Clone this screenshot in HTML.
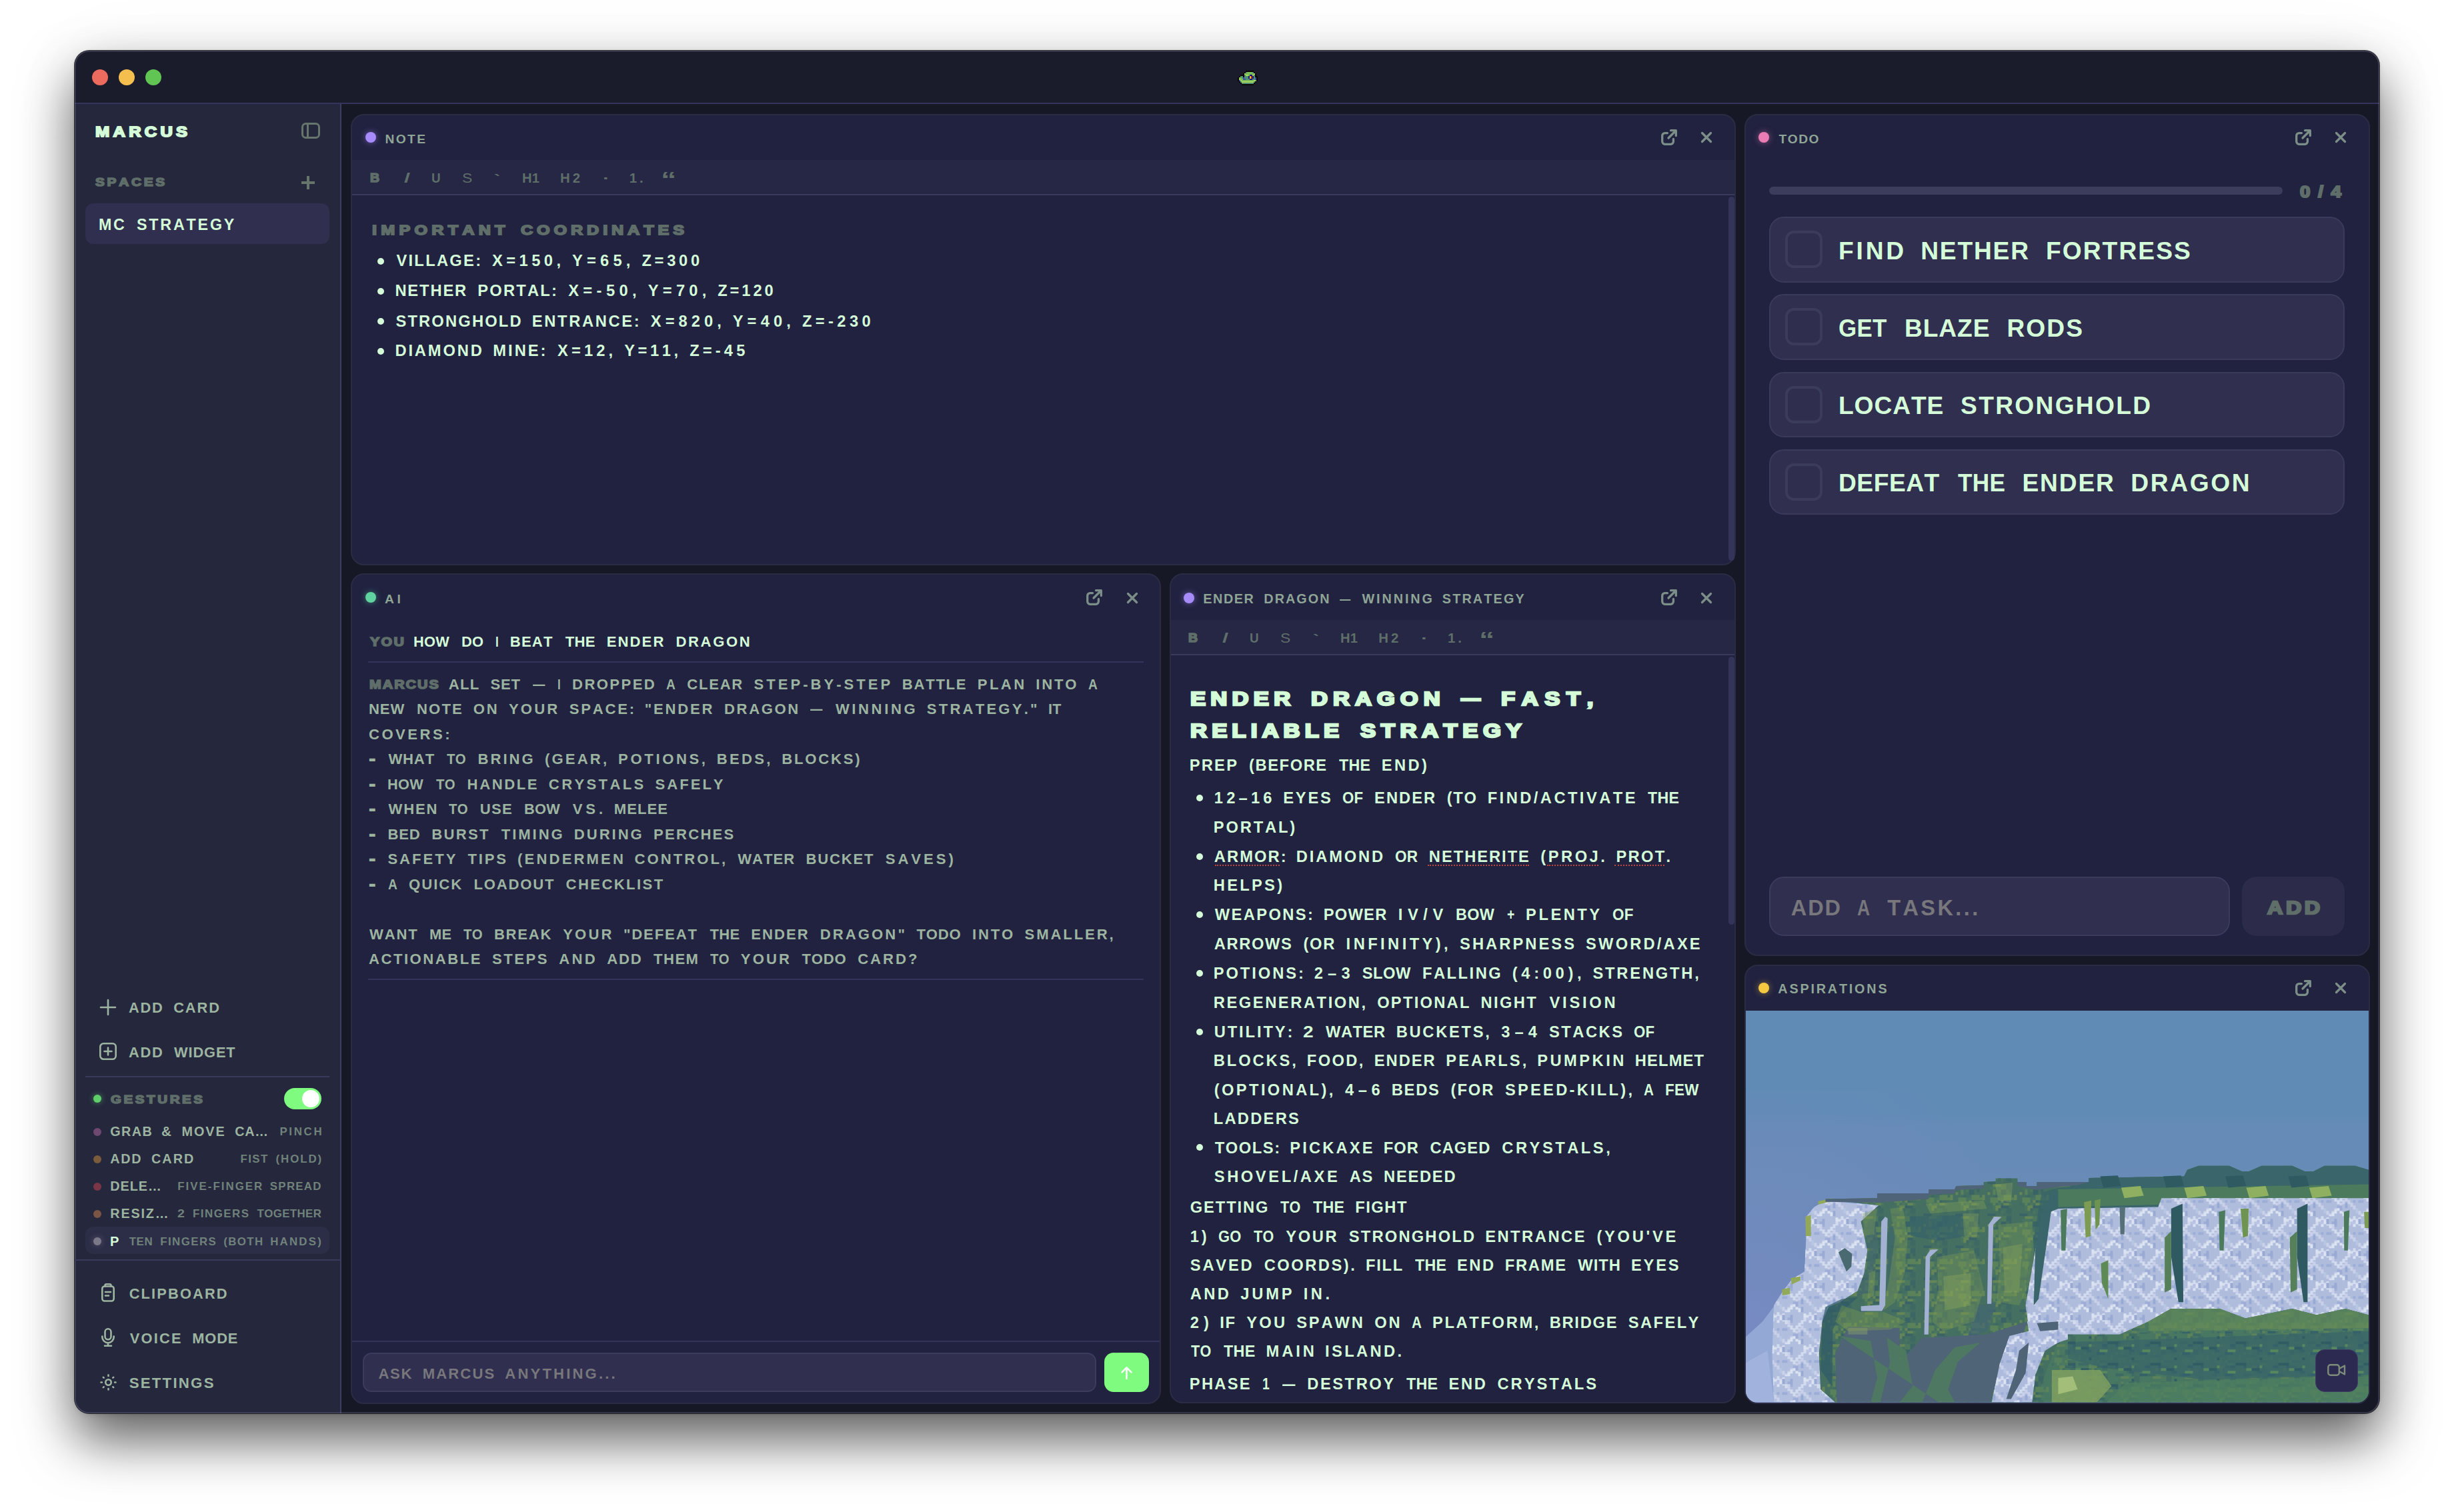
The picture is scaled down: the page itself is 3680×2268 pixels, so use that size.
<!DOCTYPE html>
<html lang="en">
<head>
<meta charset="utf-8">
<meta name="viewport" content="width=3680">
<title>Marcus — MC Strategy</title>
<style>
html,body{margin:0;padding:0;background:#fff;}
body{width:3680px;height:2268px;position:relative;overflow:hidden;font-family:"Liberation Sans","DejaVu Sans",sans-serif;font-kerning:none;}
.a{position:absolute;box-sizing:border-box;}
.t{position:absolute;white-space:pre;font-weight:bold;transform-origin:0 0;}
.win{left:112px;top:76px;width:3456px;height:2044px;border-radius:22px;background:#171826;overflow:hidden;
  box-shadow:0 0 0 1px rgba(0,0,0,.75),0 40px 80px rgba(0,0,0,.62),0 0 110px rgba(0,0,0,.05),0 3px 8px rgba(0,0,0,.1);}
.winhl{left:112px;top:76px;width:3456px;height:2044px;border-radius:22px;box-shadow:inset 0 0 0 1.5px rgba(130,130,160,.38);pointer-events:none;}
.titlebar{left:0;top:0;width:3456px;height:80px;background:#1a1b2b;border-bottom:2px solid #34355a;}
.sidebar{left:0;top:80px;width:400px;height:1964px;background:#25273d;border-right:2px solid #3d3e5f;}
.tl{width:24px;height:24px;border-radius:50%;top:104px;}
.card{background:#212240;border:2px solid #2a2c43;border-radius:20px;overflow:hidden;}

.tb{left:0;right:0;background:#252745;border-bottom:2px solid #393a5c;}
.dot{width:16px;height:16px;border-radius:50%;}
.gd{width:12px;height:12px;border-radius:50%;left:140px;}
.sb{width:9px;border-radius:5px;background:#34345a;}
.hr{height:2px;background:#33345a;}
.item{left:2653px;width:863px;height:98.5px;border-radius:22px;background:#302f4f;border:2px solid #3a3a5b;}
.cb{left:22px;top:19px;width:56px;height:56px;border-radius:13px;border:4px solid #3b3b5c;background:#2f2e4e;}
svg{position:absolute;overflow:visible;}
.ic{fill:none;stroke:#7b8f88;stroke-width:3.3;stroke-linecap:round;stroke-linejoin:round;}
.is{fill:none;stroke:#9db5a0;stroke-width:2.6;stroke-linecap:round;stroke-linejoin:round;}
</style>
</head>
<body>
<div class="a win">
  <div class="a titlebar"></div>
  <div class="a sidebar"></div>
</div>
<div class="a winhl"></div>

<!-- traffic lights -->
<div class="a tl" style="left:138px;background:#ed6a5e;"></div>
<div class="a tl" style="left:178px;background:#f5bf4f;"></div>
<div class="a tl" style="left:218px;background:#61c554;"></div>

<svg style="left:1856px;top:106px" width="30" height="22" viewBox="0 0 15 11" shape-rendering="crispEdges"><rect x="6" y="0" width="1" height="1" fill="#0c0606"/><rect x="7" y="0" width="1" height="1" fill="#0c0606"/><rect x="8" y="0" width="1" height="1" fill="#0c0606"/><rect x="9" y="0" width="1" height="1" fill="#0c0606"/><rect x="10" y="0" width="1" height="1" fill="#0c0606"/><rect x="11" y="0" width="1" height="1" fill="#0c0606"/><rect x="5" y="1" width="1" height="1" fill="#0c0606"/><rect x="6" y="1" width="1" height="1" fill="#4f8f73"/><rect x="7" y="1" width="1" height="1" fill="#7cbf5a"/><rect x="8" y="1" width="1" height="1" fill="#7cbf5a"/><rect x="9" y="1" width="1" height="1" fill="#7cbf5a"/><rect x="10" y="1" width="1" height="1" fill="#7cbf5a"/><rect x="11" y="1" width="1" height="1" fill="#4f8f73"/><rect x="12" y="1" width="1" height="1" fill="#0c0606"/><rect x="4" y="2" width="1" height="1" fill="#0c0606"/><rect x="5" y="2" width="1" height="1" fill="#a9d65c"/><rect x="6" y="2" width="1" height="1" fill="#7cbf5a"/><rect x="7" y="2" width="1" height="1" fill="#7cbf5a"/><rect x="8" y="2" width="1" height="1" fill="#7cbf5a"/><rect x="9" y="2" width="1" height="1" fill="#7cbf5a"/><rect x="10" y="2" width="1" height="1" fill="#7cbf5a"/><rect x="11" y="2" width="1" height="1" fill="#7cbf5a"/><rect x="12" y="2" width="1" height="1" fill="#a9d65c"/><rect x="13" y="2" width="1" height="1" fill="#0c0606"/><rect x="2" y="3" width="1" height="1" fill="#0c0606"/><rect x="3" y="3" width="1" height="1" fill="#0c0606"/><rect x="4" y="3" width="1" height="1" fill="#0c0606"/><rect x="5" y="3" width="1" height="1" fill="#4f8f73"/><rect x="6" y="3" width="1" height="1" fill="#a9d65c"/><rect x="7" y="3" width="1" height="1" fill="#a9d65c"/><rect x="8" y="3" width="1" height="1" fill="#7cbf5a"/><rect x="9" y="3" width="1" height="1" fill="#16167a"/><rect x="10" y="3" width="1" height="1" fill="#16167a"/><rect x="11" y="3" width="1" height="1" fill="#a9d65c"/><rect x="12" y="3" width="1" height="1" fill="#4f8f73"/><rect x="13" y="3" width="1" height="1" fill="#0c0606"/><rect x="1" y="4" width="1" height="1" fill="#0c0606"/><rect x="2" y="4" width="1" height="1" fill="#4f8f73"/><rect x="3" y="4" width="1" height="1" fill="#4f8f73"/><rect x="4" y="4" width="1" height="1" fill="#0c0606"/><rect x="5" y="4" width="1" height="1" fill="#4f8f73"/><rect x="6" y="4" width="1" height="1" fill="#4f8f73"/><rect x="7" y="4" width="1" height="1" fill="#4f8f73"/><rect x="8" y="4" width="1" height="1" fill="#16167a"/><rect x="9" y="4" width="1" height="1" fill="#f0a030"/><rect x="10" y="4" width="1" height="1" fill="#8a2a1a"/><rect x="11" y="4" width="1" height="1" fill="#16167a"/><rect x="12" y="4" width="1" height="1" fill="#4f8f73"/><rect x="13" y="4" width="1" height="1" fill="#0c0606"/><rect x="14" y="4" width="1" height="1" fill="#0c0606"/><rect x="0" y="5" width="1" height="1" fill="#0c0606"/><rect x="1" y="5" width="1" height="1" fill="#7cbf5a"/><rect x="2" y="5" width="1" height="1" fill="#7cbf5a"/><rect x="3" y="5" width="1" height="1" fill="#4f8f73"/><rect x="4" y="5" width="1" height="1" fill="#3a4fa0"/><rect x="5" y="5" width="1" height="1" fill="#4f8f73"/><rect x="6" y="5" width="1" height="1" fill="#4f8f73"/><rect x="7" y="5" width="1" height="1" fill="#4f8f73"/><rect x="8" y="5" width="1" height="1" fill="#16167a"/><rect x="9" y="5" width="1" height="1" fill="#e8d840"/><rect x="10" y="5" width="1" height="1" fill="#b03820"/><rect x="11" y="5" width="1" height="1" fill="#16167a"/><rect x="12" y="5" width="1" height="1" fill="#4f8f73"/><rect x="13" y="5" width="1" height="1" fill="#3a4fa0"/><rect x="14" y="5" width="1" height="1" fill="#0c0606"/><rect x="0" y="6" width="1" height="1" fill="#0c0606"/><rect x="1" y="6" width="1" height="1" fill="#a9d65c"/><rect x="2" y="6" width="1" height="1" fill="#7cbf5a"/><rect x="3" y="6" width="1" height="1" fill="#7cbf5a"/><rect x="4" y="6" width="1" height="1" fill="#3a4fa0"/><rect x="5" y="6" width="1" height="1" fill="#3a4fa0"/><rect x="6" y="6" width="1" height="1" fill="#4f8f73"/><rect x="7" y="6" width="1" height="1" fill="#4f8f73"/><rect x="8" y="6" width="1" height="1" fill="#4f8f73"/><rect x="9" y="6" width="1" height="1" fill="#16167a"/><rect x="10" y="6" width="1" height="1" fill="#16167a"/><rect x="11" y="6" width="1" height="1" fill="#4f8f73"/><rect x="12" y="6" width="1" height="1" fill="#4f8f73"/><rect x="13" y="6" width="1" height="1" fill="#3a4fa0"/><rect x="14" y="6" width="1" height="1" fill="#0c0606"/><rect x="0" y="7" width="1" height="1" fill="#0c0606"/><rect x="1" y="7" width="1" height="1" fill="#3a4fa0"/><rect x="2" y="7" width="1" height="1" fill="#a9d65c"/><rect x="3" y="7" width="1" height="1" fill="#7cbf5a"/><rect x="4" y="7" width="1" height="1" fill="#7cbf5a"/><rect x="5" y="7" width="1" height="1" fill="#7cbf5a"/><rect x="6" y="7" width="1" height="1" fill="#7cbf5a"/><rect x="7" y="7" width="1" height="1" fill="#7cbf5a"/><rect x="8" y="7" width="1" height="1" fill="#7cbf5a"/><rect x="9" y="7" width="1" height="1" fill="#7cbf5a"/><rect x="10" y="7" width="1" height="1" fill="#7cbf5a"/><rect x="11" y="7" width="1" height="1" fill="#7cbf5a"/><rect x="12" y="7" width="1" height="1" fill="#b5d860"/><rect x="13" y="7" width="1" height="1" fill="#7cbf5a"/><rect x="14" y="7" width="1" height="1" fill="#0c0606"/><rect x="1" y="8" width="1" height="1" fill="#0c0606"/><rect x="2" y="8" width="1" height="1" fill="#4f8f73"/><rect x="3" y="8" width="1" height="1" fill="#a9d65c"/><rect x="4" y="8" width="1" height="1" fill="#a9d65c"/><rect x="5" y="8" width="1" height="1" fill="#a9d65c"/><rect x="6" y="8" width="1" height="1" fill="#a9d65c"/><rect x="7" y="8" width="1" height="1" fill="#a9d65c"/><rect x="8" y="8" width="1" height="1" fill="#a9d65c"/><rect x="9" y="8" width="1" height="1" fill="#a9d65c"/><rect x="10" y="8" width="1" height="1" fill="#a9d65c"/><rect x="11" y="8" width="1" height="1" fill="#a9d65c"/><rect x="12" y="8" width="1" height="1" fill="#4f8f73"/><rect x="13" y="8" width="1" height="1" fill="#0c0606"/><rect x="2" y="9" width="1" height="1" fill="#0c0606"/><rect x="3" y="9" width="1" height="1" fill="#4f8f73"/><rect x="4" y="9" width="1" height="1" fill="#4f8f73"/><rect x="5" y="9" width="1" height="1" fill="#4f8f73"/><rect x="6" y="9" width="1" height="1" fill="#4f8f73"/><rect x="7" y="9" width="1" height="1" fill="#4f8f73"/><rect x="8" y="9" width="1" height="1" fill="#4f8f73"/><rect x="9" y="9" width="1" height="1" fill="#4f8f73"/><rect x="10" y="9" width="1" height="1" fill="#4f8f73"/><rect x="11" y="9" width="1" height="1" fill="#4f8f73"/><rect x="12" y="9" width="1" height="1" fill="#0c0606"/><rect x="3" y="10" width="1" height="1" fill="#0c0606"/><rect x="4" y="10" width="1" height="1" fill="#0c0606"/><rect x="5" y="10" width="1" height="1" fill="#0c0606"/><rect x="6" y="10" width="1" height="1" fill="#0c0606"/><rect x="7" y="10" width="1" height="1" fill="#0c0606"/><rect x="8" y="10" width="1" height="1" fill="#0c0606"/><rect x="9" y="10" width="1" height="1" fill="#0c0606"/><rect x="10" y="10" width="1" height="1" fill="#0c0606"/><rect x="11" y="10" width="1" height="1" fill="#0c0606"/></svg>

<!-- sidebar widgets -->
<svg style="left:452px;top:184px" width="28" height="24" viewBox="0 0 28 24"><rect x="1.5" y="1.5" width="25" height="21" rx="5" fill="none" stroke="#66756c" stroke-width="3"/><line x1="9.5" y1="2" x2="9.5" y2="22" stroke="#66756c" stroke-width="3"/></svg>
<svg style="left:452px;top:264px" width="20" height="20" viewBox="0 0 20 20"><path d="M10 0v20M0 10h20" stroke="#66756c" stroke-width="4" fill="none"/></svg>
<div class="a" style="left:128px;top:304.5px;width:366px;height:61px;border-radius:12px;background:#302f50;"></div>

<svg style="left:150px;top:1498.6px" width="24" height="24" viewBox="0 0 24 24"><path class="is" d="M12 1v22M1 12h22"/></svg>
<svg style="left:149px;top:1564px" width="26" height="26" viewBox="0 0 26 26"><rect class="is" x="1.3" y="1.3" width="23.4" height="23.4" rx="5"/><path class="is" d="M13 7.5v11M7.5 13h11"/></svg>
<div class="a hr" style="left:128px;top:1614px;width:366px;background:#38395c;"></div>
<div class="a gd" style="top:1642.4px;background:#5fcf6a;box-shadow:0 0 8px rgba(95,207,106,.6);"></div>
<div class="a" style="left:425.5px;top:1632px;width:56px;height:32px;border-radius:16px;background:#7ffb7f;"></div>
<div class="a" style="left:453px;top:1635px;width:26px;height:26px;border-radius:50%;background:#fff;"></div>
<div class="a" style="left:128px;top:1840px;width:366px;height:41px;border-radius:12px;background:#2c2d47;"></div>
<div class="a gd" style="top:1692px;background:#6d4870;"></div>
<div class="a gd" style="top:1733px;background:#7a5b3c;"></div>
<div class="a gd" style="top:1774px;background:#7a3647;"></div>
<div class="a gd" style="top:1815px;background:#7a5545;"></div>
<div class="a gd" style="top:1855.5px;background:#7b7888;box-shadow:0 0 8px rgba(123,120,136,.6);"></div>
<div class="a hr" style="left:112px;top:1889px;width:398px;background:#38395c;"></div>

<!-- clipboard / mic / settings icons -->
<svg style="left:152px;top:1925px" width="20" height="28" viewBox="0 0 20 28"><rect class="is" x="1.3" y="4.5" width="17.4" height="22" rx="3.5"/><path class="is" d="M5.5 4.5V3.2a2 2 0 0 1 2-2h5a2 2 0 0 1 2 2v1.3M6 13h8M6 18.5h5"/></svg>
<svg style="left:152px;top:1992px" width="20" height="28" viewBox="0 0 20 28"><rect class="is" x="5.5" y="1.3" width="9" height="16" rx="4.5"/><path class="is" d="M1.3 12.5v1a8.7 8.7 0 0 0 17.4 0v-1M10 22.3v4.4M5 26.7h10"/></svg>
<svg style="left:149.5px;top:2060.5px" width="25" height="25" viewBox="0 0 25 25"><circle class="is" cx="12.5" cy="12.5" r="4.2"/><path class="is" d="M12.5 1.5v1.4M12.5 22.1v1.4M1.5 12.5h1.4M22.1 12.5h1.4M4.8 4.8l.9 .9M19.3 19.3l.9 .9M4.8 20.2l.9-.9M19.3 5.7l.9-.9"/></svg>

<!-- ===== NOTE card ===== -->
<div class="a card" style="left:526px;top:170.5px;width:2076.5px;height:677px;">
  <div class="a tb" style="top:67px;height:53.5px;"></div>
</div>
<div class="a dot" style="left:548px;top:198.4px;background:#a78bfa;box-shadow:0 0 10px rgba(167,139,250,.55);"></div>
<svg style="left:2491px;top:194px" width="24" height="24" viewBox="0 0 24 24"><path class="ic" d="M9.5 5.6H5.7a4 4 0 0 0-4 4v8.7a4 4 0 0 0 4 4h8.7a4 4 0 0 0 4-4v-3.8M11 13L22 2M14.5 1.7H22.3V9.5"/></svg>
<svg style="left:2551px;top:198px" width="16" height="16" viewBox="0 0 16 16"><path class="ic" d="M1.5 1.5l13 13M14.5 1.5l-13 13"/></svg>
<div class="a sb" style="left:2591.5px;top:295px;height:546px;"></div>
<div class="a" style="left:566.3px;top:386.8px;width:10px;height:10px;border-radius:50%;background:#d4fcd8;"></div>
<div class="a" style="left:566.3px;top:431.8px;width:10px;height:10px;border-radius:50%;background:#d4fcd8;"></div>
<div class="a" style="left:566.3px;top:477px;width:10px;height:10px;border-radius:50%;background:#d4fcd8;"></div>
<div class="a" style="left:566.3px;top:521.8px;width:10px;height:10px;border-radius:50%;background:#d4fcd8;"></div>

<!-- ===== TODO card ===== -->
<div class="a card" style="left:2615.5px;top:170.5px;width:938px;height:1263.5px;"></div>
<div class="a dot" style="left:2637px;top:198px;background:#ec7cb4;box-shadow:0 0 10px rgba(236,124,180,.55);"></div>
<svg style="left:3442px;top:194px" width="24" height="24" viewBox="0 0 24 24"><path class="ic" d="M9.5 5.6H5.7a4 4 0 0 0-4 4v8.7a4 4 0 0 0 4 4h8.7a4 4 0 0 0 4-4v-3.8M11 13L22 2M14.5 1.7H22.3V9.5"/></svg>
<svg style="left:3502px;top:198px" width="16" height="16" viewBox="0 0 16 16"><path class="ic" d="M1.5 1.5l13 13M14.5 1.5l-13 13"/></svg>
<div class="a" style="left:2653px;top:280px;width:770px;height:12px;border-radius:6px;background:#3c3c5c;"></div>
<div class="a item" style="top:325.3px;"><div class="a cb"></div></div>
<div class="a item" style="top:441.4px;"><div class="a cb"></div></div>
<div class="a item" style="top:557.5px;"><div class="a cb"></div></div>
<div class="a item" style="top:673.5px;"><div class="a cb"></div></div>
<div class="a" style="left:2653px;top:1315px;width:691px;height:89px;border-radius:22px;background:#312f50;border:2px solid #3b3b5d;"></div>
<div class="a" style="left:3361.5px;top:1315px;width:154.5px;height:89px;border-radius:22px;background:#2c2b4a;"></div>

<!-- ===== ASPIRATIONS card ===== -->
<div class="a card" style="left:2615.5px;top:1447px;width:938px;height:658.5px;">
<svg class="a" style="left:0px;top:66.7px" width="934.2" height="588.3" viewBox="2617.5 1515.7 934.2 588.3" preserveAspectRatio="none">
<defs>
<linearGradient id="sky" x1="0" y1="0" x2="0" y2="1"><stop offset="0" stop-color="#5f8bb4"/><stop offset=".26" stop-color="#608bb5"/><stop offset=".3" stop-color="#668bb7"/><stop offset=".65" stop-color="#6a8ab7"/><stop offset="1" stop-color="#7089bb"/></linearGradient>
<linearGradient id="mist" x1="0" y1="0" x2="1" y2="0"><stop offset="0" stop-color="#8ea3d2" stop-opacity=".0"/><stop offset="1" stop-color="#a9b8de" stop-opacity=".95"/></linearGradient>
<radialGradient id="pur" cx="0" cy=".75" r="1" gradientUnits="objectBoundingBox"><stop offset="0" stop-color="#7f8bc9" stop-opacity=".55"/><stop offset=".5" stop-color="#7e8bc8" stop-opacity=".22"/><stop offset="1" stop-color="#7e8bc8" stop-opacity="0"/></radialGradient>
<pattern id="pw" width="48" height="48" patternUnits="userSpaceOnUse">
<rect x="0" y="24" width="4" height="6" fill="#d3dbee"/>
<rect x="4" y="20" width="4" height="6" fill="#d3dbee"/>
<rect x="8" y="16" width="4" height="6" fill="#d3dbee"/>
<rect x="12" y="12" width="4" height="6" fill="#d3dbee"/>
<rect x="16" y="8" width="4" height="6" fill="#d3dbee"/>
<rect x="20" y="4" width="4" height="6" fill="#d3dbee"/>
<rect x="24" y="0" width="4" height="6" fill="#d3dbee"/>
<rect x="28" y="4" width="4" height="6" fill="#d3dbee"/>
<rect x="32" y="8" width="4" height="6" fill="#d3dbee"/>
<rect x="36" y="12" width="4" height="6" fill="#d3dbee"/>
<rect x="40" y="16" width="4" height="6" fill="#d3dbee"/>
<rect x="44" y="20" width="4" height="6" fill="#d3dbee"/>
<rect x="0" y="32" width="4" height="6" fill="#c8d1e9"/>
<rect x="4" y="28" width="4" height="6" fill="#c8d1e9"/>
<rect x="8" y="24" width="4" height="6" fill="#c8d1e9"/>
<rect x="12" y="20" width="4" height="6" fill="#c8d1e9"/>
<rect x="16" y="24" width="4" height="6" fill="#c8d1e9"/>
<rect x="20" y="28" width="4" height="6" fill="#c8d1e9"/>
<rect x="24" y="32" width="4" height="6" fill="#c8d1e9"/>
<rect x="28" y="36" width="4" height="6" fill="#c8d1e9"/>
<rect x="32" y="40" width="4" height="6" fill="#c8d1e9"/>
<rect x="36" y="44" width="4" height="6" fill="#c8d1e9"/>
<rect x="40" y="40" width="4" height="6" fill="#c8d1e9"/>
<rect x="44" y="36" width="4" height="6" fill="#c8d1e9"/>
<rect x="0" y="34" width="4" height="6" fill="#dbe2f1"/>
<rect x="4" y="38" width="4" height="6" fill="#dbe2f1"/>
<rect x="8" y="42" width="4" height="6" fill="#dbe2f1"/>
<rect x="12" y="46" width="4" height="6" fill="#dbe2f1"/>
<rect x="16" y="2" width="4" height="6" fill="#dbe2f1"/>
<rect x="20" y="6" width="4" height="6" fill="#dbe2f1"/>
<rect x="24" y="10" width="4" height="6" fill="#dbe2f1"/>
<rect x="28" y="6" width="4" height="6" fill="#dbe2f1"/>
<rect x="32" y="2" width="4" height="6" fill="#dbe2f1"/>
<rect x="36" y="46" width="4" height="6" fill="#dbe2f1"/>
<rect x="40" y="42" width="4" height="6" fill="#dbe2f1"/>
<rect x="44" y="38" width="4" height="6" fill="#dbe2f1"/>
<rect x="20" y="8" width="8" height="4" fill="#b9c5e4"/>
<rect x="4" y="32" width="4" height="8" fill="#9cadd6"/>
<rect x="0" y="32" width="4" height="4" fill="#a1b0d8"/>
<rect x="24" y="24" width="4" height="4" fill="#9cadd6"/>
<rect x="32" y="24" width="8" height="4" fill="#9cadd6"/>
<rect x="12" y="40" width="4" height="8" fill="#98aad4"/>
<rect x="36" y="24" width="4" height="4" fill="#9cadd6"/>
<rect x="32" y="8" width="4" height="4" fill="#c9d2ea"/>
<rect x="32" y="4" width="4" height="8" fill="#98aad4"/>
<rect x="40" y="8" width="8" height="8" fill="#9cadd6"/>
<rect x="40" y="12" width="4" height="8" fill="#c9d2ea"/>
<rect x="44" y="4" width="4" height="8" fill="#98aad4"/>
<rect x="12" y="28" width="4" height="8" fill="#98aad4"/>
<rect x="28" y="36" width="4" height="8" fill="#b9c5e4"/>
</pattern><pattern id="pg" width="48" height="48" patternUnits="userSpaceOnUse">
<rect x="12" y="8" width="4" height="8" fill="#5d8459"/>
<rect x="16" y="32" width="8" height="8" fill="#6a8a55"/>
<rect x="28" y="16" width="4" height="8" fill="#4f7a5e"/>
<rect x="24" y="8" width="4" height="4" fill="#4a755f"/>
<rect x="24" y="0" width="12" height="8" fill="#4f7a5e"/>
<rect x="20" y="20" width="12" height="4" fill="#4a755f"/>
<rect x="36" y="28" width="4" height="4" fill="#4f7a5e"/>
<rect x="28" y="44" width="4" height="8" fill="#4f7a5e"/>
<rect x="44" y="16" width="8" height="8" fill="#6a8a55"/>
<rect x="24" y="40" width="4" height="4" fill="#4a755f"/>
<rect x="20" y="8" width="8" height="4" fill="#4f7a5e"/>
<rect x="12" y="16" width="12" height="4" fill="#436d61"/>
<rect x="24" y="24" width="4" height="4" fill="#6a8a55"/>
<rect x="28" y="24" width="8" height="4" fill="#3a6465"/>
<rect x="24" y="32" width="12" height="4" fill="#386166"/>
<rect x="20" y="40" width="4" height="4" fill="#416b61"/>
<rect x="4" y="8" width="4" height="8" fill="#436d61"/>
<rect x="12" y="0" width="12" height="4" fill="#6a8a55"/>
<rect x="16" y="16" width="4" height="4" fill="#3d6763"/>
<rect x="32" y="20" width="4" height="8" fill="#4a755f"/>
<rect x="32" y="36" width="8" height="8" fill="#3d6763"/>
<rect x="32" y="24" width="8" height="4" fill="#416b61"/>
<rect x="4" y="28" width="4" height="4" fill="#416b61"/>
<rect x="4" y="12" width="4" height="4" fill="#6a8a55"/>
<rect x="20" y="36" width="4" height="4" fill="#3d6763"/>
<rect x="36" y="8" width="4" height="4" fill="#3a6465"/>
<rect x="36" y="0" width="4" height="8" fill="#4f7a5e"/>
<rect x="24" y="8" width="8" height="8" fill="#386166"/>
<rect x="20" y="28" width="4" height="4" fill="#4f7a5e"/>
<rect x="28" y="28" width="8" height="4" fill="#6a8a55"/>
<rect x="8" y="4" width="12" height="4" fill="#4a755f"/>
<rect x="28" y="44" width="12" height="4" fill="#436d61"/>
<rect x="12" y="32" width="4" height="8" fill="#4a755f"/>
<rect x="32" y="0" width="8" height="8" fill="#3a6465"/>
<rect x="4" y="44" width="12" height="4" fill="#386166"/>
<rect x="8" y="20" width="12" height="8" fill="#5d8459"/>
<rect x="32" y="20" width="12" height="4" fill="#5d8459"/>
<rect x="12" y="24" width="4" height="8" fill="#5d8459"/>
<rect x="28" y="20" width="4" height="4" fill="#3d6763"/>
<rect x="28" y="16" width="12" height="8" fill="#5d8459"/>
</pattern><pattern id="pf" width="64" height="32" patternUnits="userSpaceOnUse">
<rect x="44" y="28" width="16" height="4" fill="#3d6a66"/>
<rect x="8" y="12" width="12" height="4" fill="#33606a"/>
<rect x="60" y="12" width="12" height="4" fill="#3d6a66"/>
<rect x="60" y="0" width="24" height="4" fill="#5a8a5e"/>
<rect x="44" y="4" width="16" height="4" fill="#33606a"/>
<rect x="24" y="28" width="16" height="4" fill="#2f5a64"/>
<rect x="40" y="4" width="16" height="4" fill="#5a8a5e"/>
<rect x="48" y="4" width="12" height="4" fill="#2f5a64"/>
<rect x="16" y="0" width="24" height="4" fill="#2f5a64"/>
<rect x="56" y="8" width="24" height="4" fill="#356268"/>
<rect x="60" y="20" width="24" height="4" fill="#2f5a64"/>
<rect x="16" y="0" width="24" height="4" fill="#33606a"/>
<rect x="12" y="8" width="12" height="4" fill="#5a8a5e"/>
<rect x="24" y="0" width="12" height="4" fill="#3d6a66"/>
</pattern><clipPath id="lc"><rect x="2617.5" y="1515.7" width="934.2" height="588.3"/></clipPath></defs>
<g clip-path="url(#lc)">
<rect x="2617.5" y="1515.7" width="934.2" height="588.3" fill="url(#sky)"/>
<rect x="2617.5" y="1635.7" width="420" height="470" fill="url(#pur)"/>
<polygon points="2616.0,2006.2 2642.6,1982.0 2664.4,1953.0 2674.1,2103.0 2616.0,2103.0" fill="#9bafd9" opacity=".8"/>
<polygon points="2616.0,2044.9 2649.9,2025.6 2659.6,2103.0 2616.0,2103.0" fill="#a7b8e0" opacity=".7"/>
<polygon points="2737.0,1800.5 2816.9,1807.8 2790.2,1832.0 2799.9,1875.5 2795.1,1909.4 2785.4,1936.0 2758.8,1953.0 2741.8,1960.2 2732.2,1982.0 2727.3,2030.4 2729.7,2083.7 2751.5,2103.0 2659.6,2103.0 2657.1,2030.4 2659.6,1957.8 2671.7,1938.5 2686.2,1919.1 2705.5,1907.0 2708.0,1856.2 2708.0,1824.7 2720.1,1810.2" fill="#b2bedd"/><polygon points="2737.0,1800.5 2816.9,1807.8 2790.2,1832.0 2799.9,1875.5 2795.1,1909.4 2785.4,1936.0 2758.8,1953.0 2741.8,1960.2 2732.2,1982.0 2727.3,2030.4 2729.7,2083.7 2751.5,2103.0 2659.6,2103.0 2657.1,2030.4 2659.6,1957.8 2671.7,1938.5 2686.2,1919.1 2705.5,1907.0 2708.0,1856.2 2708.0,1824.7 2720.1,1810.2" fill="url(#pw)"/>
<polygon points="2756.4,1877.9 2766.0,1871.9 2776.9,1880.4 2775.7,1899.7 2768.5,1907.0 2761.2,1890.0" fill="#4a6a72"/>
<polygon points="2706.8,1824.7 2715.2,1822.3 2715.2,1853.7 2707.5,1853.7" fill="#92a95a"/>
<polygon points="2685.0,1916.7 2699.5,1914.2 2699.5,1920.3 2686.2,1926.4" fill="#92a95a"/>
<polygon points="2671.7,1933.6 2683.8,1931.2 2683.8,1940.9 2672.1,1942.8" fill="#92a95a"/>
<polygon points="2726.1,1801.7 2746.7,1796.9 2746.7,1801.0 2726.1,1806.6" fill="#92a95a"/>
<polygon points="2737.0,1798.1 2814.5,1796.9 2814.5,1789.6 2891.9,1789.6 2891.9,1783.6 2930.6,1783.6 2933.0,1778.7 2974.2,1777.5 2974.2,1772.7 2992.3,1771.5 2992.3,1767.1 3025.0,1767.1 3025.0,1772.7 3038.3,1772.7 3038.3,1778.7 3054.0,1778.7 3054.0,1772.7 3086.0,1772.7 3132.0,1772.7 3132.0,1766.6 3274.8,1764.2 3279.6,1754.5 3296.6,1748.5 3342.5,1748.5 3361.9,1756.9 3371.6,1756.9 3390.9,1748.5 3436.9,1748.5 3456.3,1756.9 3468.4,1756.9 3485.3,1748.5 3531.3,1748.5 3551.9,1754.5 3551.9,2103.0 2751.5,2103.0 2729.7,2083.7 2727.3,2030.4 2732.2,1982.0 2741.8,1960.2 2758.8,1953.0 2785.4,1936.0 2795.1,1909.4 2799.9,1875.5 2790.2,1832.0 2816.9,1807.8" fill="#456f61"/><polygon points="2737.0,1798.1 2814.5,1796.9 2814.5,1789.6 2891.9,1789.6 2891.9,1783.6 2930.6,1783.6 2933.0,1778.7 2974.2,1777.5 2974.2,1772.7 2992.3,1771.5 2992.3,1767.1 3025.0,1767.1 3025.0,1772.7 3038.3,1772.7 3038.3,1778.7 3054.0,1778.7 3054.0,1772.7 3086.0,1772.7 3132.0,1772.7 3132.0,1766.6 3274.8,1764.2 3279.6,1754.5 3296.6,1748.5 3342.5,1748.5 3361.9,1756.9 3371.6,1756.9 3390.9,1748.5 3436.9,1748.5 3456.3,1756.9 3468.4,1756.9 3485.3,1748.5 3531.3,1748.5 3551.9,1754.5 3551.9,2103.0 2751.5,2103.0 2729.7,2083.7 2727.3,2030.4 2732.2,1982.0 2741.8,1960.2 2758.8,1953.0 2785.4,1936.0 2795.1,1909.4 2799.9,1875.5 2790.2,1832.0 2816.9,1807.8" fill="url(#pg)" opacity=".85"/>
<polygon points="2737.0,1798.1 2814.5,1796.9 2814.5,1789.6 2891.9,1789.6 2891.9,1783.6 2930.6,1783.6 2933.0,1778.7 2974.2,1777.5 2974.2,1782.4 2933.0,1784.8 2930.6,1789.6 2891.9,1792.0 2891.9,1798.1 2816.9,1803.4 2737.0,1802.4" fill="#4f6478"/>
<polygon points="3025.0,1772.7 3038.3,1772.7 3038.3,1778.7 3054.0,1778.7 3054.0,1772.7 3086.0,1772.7 3132.0,1772.7 3132.0,1766.6 3197.3,1766.1 3197.3,1771.5 3132.0,1776.3 3086.0,1779.9 3054.0,1784.8 3025.0,1778.7" fill="#4f6478"/>
<polygon points="2862.9,1824.7 2942.7,1822.3 2950.0,1853.7 2906.4,1861.0 2865.3,1853.7" fill="#36626a" opacity=".7"/>
<polygon points="3061.3,1788.4 3086.0,1781.1 3115.0,1778.7 3100.5,1812.6 3075.8,1841.6 3056.5,1957.8 3041.9,1982.0 3037.1,1923.9 3051.6,1841.6" fill="#36626a" opacity=".7"/>
<polygon points="2737.0,1960.2 2761.2,1948.1 2785.4,1945.7 2761.2,1967.5 2747.9,1994.1 2746.7,2078.8 2729.7,2054.6 2732.2,1982.0" fill="#2f5a66" opacity=".7"/>
<polygon points="2792.7,1836.8 2809.6,1827.1 2816.9,1865.8 2807.2,1909.4 2799.9,1938.5 2785.4,1943.3 2797.5,1909.4 2802.4,1875.5" fill="#456a6c" opacity=".7"/>
<polygon points="2829.0,1841.6 2841.1,1836.8 2843.5,1933.6 2831.4,1948.1" fill="#3f686a" opacity=".7"/>
<polygon points="2964.5,1957.8 2993.5,1953.0 2979.0,1996.5 2950.0,2006.2" fill="#456672" opacity=".7"/>
<polygon points="2770.9,1989.3 2848.3,1991.7 2848.3,2042.5 2882.2,2006.2 2979.0,2001.4 3039.5,1982.0 3027.4,2018.3 2998.4,2054.6 2983.9,2103.0 2753.9,2103.0 2751.5,2030.4" fill="#4f6577"/>
<polygon points="2758.8,2003.8 2804.8,2011.1 2814.5,2066.7 2804.8,2103.0 2819.3,2103.0 2833.8,2042.5 2829.0,2006.2 2858.0,2025.6 2867.7,2078.8 2848.3,2103.0 2882.2,2103.0 2901.6,2054.6 2930.6,2020.7 2969.3,2013.5 2935.5,2042.5 2920.9,2083.7 2930.6,2103.0 2906.4,2103.0" fill="#4e7a5e" opacity=".9"/>
<polygon points="2833.8,1812.6 2853.2,1810.2 2860.4,1856.2 2855.6,1909.4 2841.1,1953.0 2824.1,1965.1 2833.8,1909.4 2841.1,1856.2" fill="#7f9d50" opacity=".36"/>
<polygon points="2887.1,1805.3 2974.2,1800.5 2979.0,1812.6 2894.3,1819.9" fill="#86a354" opacity=".36"/>
<polygon points="2991.1,1776.3 3017.7,1773.9 3015.3,1802.9 2996.0,1800.5" fill="#93ab5a" opacity=".36"/>
<polygon points="2904.0,1885.2 2959.7,1875.5 2974.2,1933.6 2959.7,1982.0 2913.7,1996.5 2896.7,1982.0 2906.4,1933.6" fill="#7d9b52" opacity=".36"/>
<polygon points="2913.7,1914.2 2954.8,1909.4 2954.8,1957.8 2916.1,1965.1" fill="#94ac5c" opacity=".36"/>
<polygon points="2996.0,1836.8 3046.8,1832.0 3051.6,1909.4 3027.4,1957.8 2993.5,1953.0 2998.4,1894.9" fill="#7b9a52" opacity=".36"/>
<polygon points="3003.2,1870.7 3032.3,1865.8 3027.4,1938.5 3005.6,1938.5" fill="#90a95a" opacity=".36"/>
<polygon points="2761.2,1957.8 2790.2,1967.5 2824.1,1967.5 2858.0,1982.0 2833.8,1994.1 2770.9,1996.5 2751.5,1982.0" fill="#7f9d50" opacity=".36"/>
<polygon points="2770.9,1991.7 2799.9,1991.7 2799.9,2001.4 2770.9,2001.4" fill="#98b060" opacity=".36"/>
<polygon points="2792.7,1819.9 2814.5,1812.6 2809.6,1851.3 2795.1,1853.7" fill="#7d9b52" opacity=".36"/>
<polygon points="2942.7,1819.9 2966.9,1819.9 2964.5,1853.7 2945.1,1856.2" fill="#88a456" opacity=".36"/>
<polygon points="2802.4,1909.4 2812.0,1904.6 2809.6,1943.3 2799.9,1948.1" fill="#8aa556" opacity=".36"/>
<polygon points="2820.7,1832.0 2826.6,1824.7 2830.2,1827.1 2826.6,1957.8 2821.7,1966.3 2790.2,1966.3 2790.2,1959.0 2817.8,1957.3" fill="#a3b1d3"/>
<polygon points="2887.1,1885.2 2894.3,1874.3 2906.4,1873.6 2893.8,1885.2 2891.4,2001.4 2885.1,2001.4" fill="#a3b1d3"/>
<polygon points="2981.4,1836.8 2989.9,1824.7 3000.8,1825.2 2988.7,1836.8 2985.8,1955.4 2979.5,1955.4" fill="#a3b1d3"/>
<polygon points="3132.0,1772.7 3132.0,1766.6 3274.8,1764.2 3279.6,1754.5 3296.6,1748.5 3342.5,1748.5 3361.9,1756.9 3371.6,1756.9 3390.9,1748.5 3436.9,1748.5 3456.3,1756.9 3468.4,1756.9 3485.3,1748.5 3531.3,1748.5 3551.9,1754.5 3551.9,1812.6 3086.0,1819.9 3086.0,1812.6 3063.7,1819.9 3075.8,1788.4" fill="#3a656a"/>
<polygon points="3086.0,1783.6 3551.9,1776.3 3551.9,1799.3 3086.0,1810.2" fill="#4b7a5c"/>
<polygon points="3180.4,1781.1 3209.4,1778.7 3214.3,1793.2 3185.2,1796.9" fill="#8fb060"/>
<polygon points="3148.9,1764.2 3175.5,1763.0 3180.4,1778.7 3153.8,1781.1" fill="#2f5a62"/>
<polygon points="3274.8,1781.1 3303.8,1778.7 3308.7,1793.2 3279.6,1796.9" fill="#8fb060"/>
<polygon points="3243.3,1764.2 3269.9,1763.0 3274.8,1778.7 3248.1,1781.1" fill="#2f5a62"/>
<polygon points="3367.9,1781.1 3397.0,1778.7 3401.8,1793.2 3372.8,1796.9" fill="#8fb060"/>
<polygon points="3336.5,1764.2 3363.1,1763.0 3367.9,1778.7 3341.3,1781.1" fill="#2f5a62"/>
<polygon points="3462.3,1781.1 3491.4,1778.7 3496.2,1793.2 3467.2,1796.9" fill="#8fb060"/>
<polygon points="3430.9,1764.2 3457.5,1763.0 3462.3,1778.7 3435.7,1781.1" fill="#2f5a62"/>
<polygon points="3063.7,1822.3 3086.0,1812.6 3086.0,1812.6 3236.0,1810.2 3240.9,1796.9 3551.9,1796.9 3551.9,1972.3 3516.8,1962.7 3473.2,1972.3 3436.9,1962.7 3366.7,1977.2 3328.0,1962.7 3255.4,1962.7 3221.5,1982.0 3178.0,2001.4 3086.0,2001.4 3086.0,2001.4 3041.9,1991.7 3037.1,1957.8 3051.6,1875.5" fill="#b0bcdc"/><polygon points="3063.7,1822.3 3086.0,1812.6 3086.0,1812.6 3236.0,1810.2 3240.9,1796.9 3551.9,1796.9 3551.9,1972.3 3516.8,1962.7 3473.2,1972.3 3436.9,1962.7 3366.7,1977.2 3328.0,1962.7 3255.4,1962.7 3221.5,1982.0 3178.0,2001.4 3086.0,2001.4 3086.0,2001.4 3041.9,1991.7 3037.1,1957.8 3051.6,1875.5" fill="url(#pw)"/>
<polygon points="3255.4,1812.6 3272.4,1805.3 3273.6,1953.0 3266.3,1953.0 3255.4,1885.2" fill="#2f5a62"/>
<polygon points="3444.2,1812.6 3459.9,1805.3 3459.9,1953.0 3453.9,1953.0 3444.2,1885.2" fill="#2f5a62"/>
<polygon points="3245.7,1856.2 3255.4,1846.5 3255.4,1933.6 3245.7,1938.5" fill="#55805a"/>
<polygon points="3433.3,1856.2 3444.2,1846.5 3444.2,1933.6 3434.5,1938.5" fill="#55805a"/>
<polygon points="3326.8,1817.4 3336.5,1815.0 3334.1,1875.5 3328.0,1875.5" fill="#4b7a5c"/>
<polygon points="3359.5,1812.6 3371.6,1812.6 3370.4,1853.7 3363.1,1856.2" fill="#6f9350"/>
<polygon points="3514.4,1817.4 3522.8,1815.0 3520.4,1875.5 3514.8,1875.5" fill="#4b7a5c"/>
<polygon points="3544.6,1817.4 3551.9,1817.4 3551.9,1841.6 3545.8,1841.6" fill="#7b9a52"/>
<polygon points="3178.0,1810.2 3186.4,1810.2 3185.2,1851.3 3179.2,1851.3" fill="#56707a"/>
<polygon points="3124.7,1802.9 3135.6,1800.5 3134.4,1853.7 3127.1,1856.2" fill="#7d9b52"/>
<polygon points="3140.5,1800.5 3149.4,1798.1 3147.7,1836.8 3142.1,1844.1" fill="#6f9350"/>
<polygon points="3150.1,1894.9 3161.0,1890.0 3161.0,1948.1 3151.3,1923.9" fill="#5e8a55"/>
<polygon points="3089.6,1815.0 3099.3,1812.6 3096.9,1875.5 3090.8,1875.5" fill="#4b7a5c"/>
<polygon points="3061.3,1819.9 3075.8,1812.6 3068.6,1865.8 3056.5,1948.1 3049.2,1957.8 3051.6,1875.5" fill="#3a656a"/>
<polygon points="3086.0,2001.4 3178.0,2001.4 3221.5,1982.0 3255.4,1962.7 3328.0,1962.7 3366.7,1977.2 3436.9,1962.7 3473.2,1972.3 3516.8,1962.7 3551.9,1972.3 3551.9,2103.0 3051.6,2103.0 3068.6,2054.6 3086.0,2011.1" fill="#487762"/><polygon points="3086.0,2001.4 3178.0,2001.4 3221.5,1982.0 3255.4,1962.7 3328.0,1962.7 3366.7,1977.2 3436.9,1962.7 3473.2,1972.3 3516.8,1962.7 3551.9,1972.3 3551.9,2103.0 3051.6,2103.0 3068.6,2054.6 3086.0,2011.1" fill="url(#pg)" opacity=".6"/>
<polygon points="3221.5,1982.0 3255.4,1962.7 3328.0,1962.7 3366.7,1977.2 3436.9,1962.7 3473.2,1972.3 3516.8,1962.7 3551.9,1972.3 3551.9,1991.7 3221.5,1996.5" fill="#6a9058" opacity=".55"/>
<polygon points="3100.5,2013.5 3551.9,1996.5 3551.9,2061.9 3303.8,2069.1 3158.6,2052.2 3100.5,2037.7" fill="#3a666a" opacity=".75"/>
<polygon points="3100.5,2001.4 3551.9,1991.7 3551.9,2078.8 3158.6,2083.7 3100.5,2054.6" fill="url(#pf)" opacity=".9"/>
<polygon points="3076.3,2054.6 3148.9,2054.6 3165.9,2078.8 3144.1,2103.0 3076.3,2103.0" fill="#7fa060" opacity=".85"/>
<polygon points="3086.0,2066.7 3107.8,2064.3 3115.0,2083.7 3086.0,2090.9" fill="#a3be78"/>
<polygon points="3187.6,2074.0 3551.9,2064.3 3551.9,2103.0 3158.6,2103.0" fill="#4f8060" opacity=".7"/>
<polygon points="3039.5,1982.0 3086.0,1969.9 3100.5,1999.0 3100.5,2008.6 3086.0,2013.5 3066.1,2025.6 3051.6,2061.9 3046.8,2103.0 2986.3,2103.0 2998.4,2044.9 3012.9,2003.8 3041.9,1996.5" fill="#aebbdc"/><polygon points="3039.5,1982.0 3086.0,1969.9 3100.5,1999.0 3100.5,2008.6 3086.0,2013.5 3066.1,2025.6 3051.6,2061.9 3046.8,2103.0 2986.3,2103.0 2998.4,2044.9 3012.9,2003.8 3041.9,1996.5" fill="url(#pw)"/>
<polygon points="3027.4,2025.6 3041.9,2013.5 3037.1,2059.5 3015.3,2098.2 3008.1,2098.2 3022.6,2054.6" fill="#4f6577"/>
<polygon points="3054.0,1984.4 3086.0,1982.0 3086.0,1994.1 3058.9,1996.5" fill="#4f6577"/>
</g></svg>
</div>
<div class="a dot" style="left:2636.8px;top:1474.4px;background:#f5c842;box-shadow:0 0 10px rgba(245,200,66,.5);"></div>
<svg style="left:3442px;top:1470px" width="24" height="24" viewBox="0 0 24 24"><path class="ic" d="M9.5 5.6H5.7a4 4 0 0 0-4 4v8.7a4 4 0 0 0 4 4h8.7a4 4 0 0 0 4-4v-3.8M11 13L22 2M14.5 1.7H22.3V9.5"/></svg>
<svg style="left:3502px;top:1474px" width="16" height="16" viewBox="0 0 16 16"><path class="ic" d="M1.5 1.5l13 13M14.5 1.5l-13 13"/></svg>
<div class="a" style="left:3472px;top:2024px;width:63.5px;height:63.5px;border-radius:14px;background:#2c2a50;border:1.5px solid #3d3b63;"></div>
<svg style="left:3490px;top:2045px" width="28" height="20" viewBox="0 0 28 20"><rect x="1.3" y="2.3" width="16.5" height="15.4" rx="3.5" fill="none" stroke="#7d8c7a" stroke-width="2.4"/><path d="M18 8l8-4.5v13L18 12" fill="none" stroke="#7d8c7a" stroke-width="2.4" stroke-linejoin="round"/></svg>

<!-- ===== AI card ===== -->
<div class="a card" style="left:526px;top:860px;width:1215px;height:1245.5px;"></div>
<div class="a dot" style="left:548px;top:888px;background:#5fd4a0;box-shadow:0 0 10px rgba(95,212,160,.5);"></div>
<svg style="left:1629px;top:884px" width="24" height="24" viewBox="0 0 24 24"><path class="ic" d="M9.5 5.6H5.7a4 4 0 0 0-4 4v8.7a4 4 0 0 0 4 4h8.7a4 4 0 0 0 4-4v-3.8M11 13L22 2M14.5 1.7H22.3V9.5"/></svg>
<svg style="left:1689.5px;top:888.5px" width="16" height="16" viewBox="0 0 16 16"><path class="ic" d="M1.5 1.5l13 13M14.5 1.5l-13 13"/></svg>
<div class="a hr" style="left:551.7px;top:992px;width:1163px;"></div>
<div class="a hr" style="left:551.7px;top:1467.6px;width:1163px;"></div>
<div class="a hr" style="left:528px;top:2011px;width:1211px;"></div>
<div class="a" style="left:544px;top:2029px;width:1100px;height:59px;border-radius:13px;background:#302f4f;border:2px solid #3b3b5d;"></div>
<div class="a" style="left:1656px;top:2029px;width:67px;height:59px;border-radius:14px;background:#7ffb7f;"></div>
<svg style="left:1681px;top:2050px" width="17" height="19" viewBox="0 0 17 19"><path d="M8.5 18V1.6M1.5 8.3l7-7 7 7" fill="none" stroke="#fff" stroke-width="2.6" stroke-linecap="round" stroke-linejoin="round"/></svg>

<!-- ===== ENDER card ===== -->
<div class="a card" style="left:1753.5px;top:860px;width:849px;height:1245px;">
  <div class="a tb" style="top:67.5px;height:53.5px;"></div>
</div>
<div class="a dot" style="left:1775px;top:888.6px;background:#a78bfa;box-shadow:0 0 10px rgba(167,139,250,.55);"></div>
<svg style="left:2491px;top:884px" width="24" height="24" viewBox="0 0 24 24"><path class="ic" d="M9.5 5.6H5.7a4 4 0 0 0-4 4v8.7a4 4 0 0 0 4 4h8.7a4 4 0 0 0 4-4v-3.8M11 13L22 2M14.5 1.7H22.3V9.5"/></svg>
<svg style="left:2551px;top:888.5px" width="16" height="16" viewBox="0 0 16 16"><path class="ic" d="M1.5 1.5l13 13M14.5 1.5l-13 13"/></svg>
<div class="a sb" style="left:2591.5px;top:985px;height:402px;"></div>
<div class="a" style="left:1793.5px;top:1192.0px;width:10px;height:10px;border-radius:50%;background:#d4fcd8;"></div>
<div class="a" style="left:1793.5px;top:1280.0px;width:10px;height:10px;border-radius:50%;background:#d4fcd8;"></div>
<div class="a" style="left:1793.5px;top:1366.8px;width:10px;height:10px;border-radius:50%;background:#d4fcd8;"></div>
<div class="a" style="left:1793.5px;top:1454.6px;width:10px;height:10px;border-radius:50%;background:#d4fcd8;"></div>
<div class="a" style="left:1793.5px;top:1542.5px;width:10px;height:10px;border-radius:50%;background:#d4fcd8;"></div>
<div class="a" style="left:1793.5px;top:1716.4px;width:10px;height:10px;border-radius:50%;background:#d4fcd8;"></div>

<div class="a" style="left:1821.8px;top:1297px;width:97.5px;height:0;border-bottom:2.5px dotted #c0453a;"></div>
<div class="a" style="left:2141px;top:1297px;width:152.0px;height:0;border-bottom:2.5px dotted #c0453a;"></div>
<div class="a" style="left:2320.3px;top:1297px;width:76.7px;height:0;border-bottom:2.5px dotted #c0453a;"></div>
<div class="a" style="left:2421.4px;top:1297px;width:74.6px;height:0;border-bottom:2.5px dotted #c0453a;"></div>


<div class="t" style="left:142.5px;top:187.49px;color:#d4fcd8;font-size:21.21px;line-height:21.21px;letter-spacing:4.4px;font-weight:bold;-webkit-text-stroke:1.91px currentColor;transform:scaleX(1.2);">MARCUS</div>
<div class="t" style="left:142.5px;top:265.43px;color:#5f6e68;font-size:17.35px;line-height:17.35px;letter-spacing:3.1px;font-weight:bold;-webkit-text-stroke:1.56px currentColor;transform:scaleX(1.2);">SPACES</div>
<div class="t" style="left:148.0px;top:325.71px;color:#d4fcd8;font-size:23.26px;line-height:23.26px;letter-spacing:2.75px;font-weight:bold;">MC</div>
<div class="t" style="left:205.05px;top:325.71px;color:#d4fcd8;font-size:23.26px;line-height:23.26px;letter-spacing:2.807px;font-weight:bold;">STRATEGY</div>
<div class="t" style="left:193.0px;top:1500.94px;color:#9db5a0;font-size:21.8px;line-height:21.8px;letter-spacing:1.786px;font-weight:bold;">ADD</div>
<div class="t" style="left:260.14px;top:1500.94px;color:#9db5a0;font-size:21.8px;line-height:21.8px;letter-spacing:1.952px;font-weight:bold;">CARD</div>
<div class="t" style="left:193.0px;top:1567.94px;color:#9db5a0;font-size:21.8px;line-height:21.8px;letter-spacing:1.778px;font-weight:bold;">ADD</div>
<div class="t" style="left:261.11px;top:1567.94px;color:#9db5a0;font-size:21.8px;line-height:21.8px;letter-spacing:0.878px;font-weight:bold;">WIDGET</div>
<div class="t" style="left:166.0px;top:1641.46px;color:#5f6e68;font-size:17.1px;line-height:17.1px;letter-spacing:3.0px;font-weight:bold;-webkit-text-stroke:1.54px currentColor;transform:scaleX(1.2);">GESTURES</div>
<div class="t" style="left:165.3px;top:1688.27px;color:#9db5a0;font-size:19.77px;line-height:19.77px;letter-spacing:1.437px;font-weight:bold;">GRAB</div>
<div class="t" style="left:242.2px;top:1688.27px;color:#9db5a0;font-size:19.77px;line-height:19.77px;letter-spacing:0px;font-weight:bold;transform:scaleX(1.0462);">&amp;</div>
<div class="t" style="left:272.48px;top:1688.27px;color:#9db5a0;font-size:19.77px;line-height:19.77px;letter-spacing:2.01px;font-weight:bold;">MOVE</div>
<div class="t" style="left:352.15px;top:1688.27px;color:#9db5a0;font-size:19.77px;line-height:19.77px;letter-spacing:0.777px;font-weight:bold;">CA…</div>
<div class="t" style="left:419.4px;top:1690.23px;color:#70827a;font-size:16.86px;line-height:16.86px;letter-spacing:2.7px;font-weight:bold;">PINCH</div>
<div class="t" style="left:165.3px;top:1729.27px;color:#9db5a0;font-size:19.77px;line-height:19.77px;letter-spacing:1.72px;font-weight:bold;">ADD</div>
<div class="t" style="left:226.98px;top:1729.27px;color:#9db5a0;font-size:19.77px;line-height:19.77px;letter-spacing:2.073px;font-weight:bold;">CARD</div>
<div class="t" style="left:360.6px;top:1731.23px;color:#70827a;font-size:16.86px;line-height:16.86px;letter-spacing:1.376px;font-weight:bold;">FIST</div>
<div class="t" style="left:413.44px;top:1731.23px;color:#70827a;font-size:16.86px;line-height:16.86px;letter-spacing:1.952px;font-weight:bold;">(HOLD)</div>
<div class="t" style="left:165.3px;top:1770.27px;color:#9db5a0;font-size:19.77px;line-height:19.77px;letter-spacing:1.0px;font-weight:bold;">DELE…</div>
<div class="t" style="left:266.3px;top:1772.23px;color:#70827a;font-size:16.86px;line-height:16.86px;letter-spacing:2.014px;font-weight:bold;">FIVE-FINGER</div>
<div class="t" style="left:404.87px;top:1772.23px;color:#70827a;font-size:16.86px;line-height:16.86px;letter-spacing:1.266px;font-weight:bold;">SPREAD</div>
<div class="t" style="left:165.3px;top:1811.27px;color:#9db5a0;font-size:19.77px;line-height:19.77px;letter-spacing:1.86px;font-weight:bold;">RESIZ…</div>
<div class="t" style="left:266.14px;top:1813.23px;color:#70827a;font-size:16.86px;line-height:16.86px;letter-spacing:0px;font-weight:bold;transform:scaleX(1.16);">2</div>
<div class="t" style="left:289.01px;top:1813.23px;color:#70827a;font-size:16.86px;line-height:16.86px;letter-spacing:1.507px;font-weight:bold;">FINGERS</div>
<div class="t" style="left:385.48px;top:1813.23px;color:#70827a;font-size:16.86px;line-height:16.86px;letter-spacing:0.388px;font-weight:bold;">TOGETHER</div>
<div class="t" style="left:165.28px;top:1852.57px;color:#d4fcd8;font-size:19.77px;line-height:19.77px;letter-spacing:0px;font-weight:bold;transform:scaleX(1.0167);">P</div>
<div class="t" style="left:193.7px;top:1854.53px;color:#70827a;font-size:16.86px;line-height:16.86px;letter-spacing:0.59px;font-weight:bold;">TEN</div>
<div class="t" style="left:240.18px;top:1854.53px;color:#70827a;font-size:16.86px;line-height:16.86px;letter-spacing:1.443px;font-weight:bold;">FINGERS</div>
<div class="t" style="left:335.13px;top:1854.53px;color:#70827a;font-size:16.86px;line-height:16.86px;letter-spacing:1.44px;font-weight:bold;">(BOTH</div>
<div class="t" style="left:405.19px;top:1854.53px;color:#70827a;font-size:16.86px;line-height:16.86px;letter-spacing:2.202px;font-weight:bold;">HANDS)</div>
<div class="t" style="left:193.7px;top:1929.94px;color:#9db5a0;font-size:21.8px;line-height:21.8px;letter-spacing:2.163px;font-weight:bold;">CLIPBOARD</div>
<div class="t" style="left:194.7px;top:1996.54px;color:#9db5a0;font-size:21.8px;line-height:21.8px;letter-spacing:2.256px;font-weight:bold;">VOICE</div>
<div class="t" style="left:288.23px;top:1996.54px;color:#9db5a0;font-size:21.8px;line-height:21.8px;letter-spacing:0.922px;font-weight:bold;">MODE</div>
<div class="t" style="left:193.7px;top:2063.87px;color:#9db5a0;font-size:22.24px;line-height:22.24px;letter-spacing:2.229px;font-weight:bold;">SETTINGS</div>
<div class="t" style="left:577.6px;top:198.86px;color:#8fa596;font-size:19.19px;line-height:19.19px;letter-spacing:2.367px;font-weight:bold;">NOTE</div>
<div class="t" style="left:555.0px;top:258.36px;color:#5f6e68;font-size:17.99px;line-height:17.99px;letter-spacing:0px;font-weight:bold;-webkit-text-stroke:1.62px currentColor;transform:scaleX(1.0769);">B</div>
<div class="t" style="left:606.0px;top:257.17px;color:#5f6e68;font-size:20.35px;line-height:20.35px;letter-spacing:0px;font-weight:bold;transform:scaleX(1.6);">/</div>
<div class="t" style="left:647.08px;top:257.17px;color:#5f6e68;font-size:20.35px;line-height:20.35px;letter-spacing:0px;font-weight:bold;transform:scaleX(0.9231);">U</div>
<div class="t" style="left:692.88px;top:257.17px;color:#5f6e68;font-size:20.35px;line-height:20.35px;letter-spacing:0px;font-weight:normal;transform:scaleX(1.125);">S</div>
<div class="t" style="left:741.34px;top:259.17px;color:#5f6e68;font-size:20.35px;line-height:20.35px;letter-spacing:0px;font-weight:bold;transform:scaleX(1.36);">`</div>
<div class="t" style="left:783.01px;top:257.17px;color:#5f6e68;font-size:20.35px;line-height:20.35px;letter-spacing:0.3px;font-weight:bold;transform:scaleX(0.9881);">H1</div>
<div class="t" style="left:840.0px;top:257.17px;color:#5f6e68;font-size:20.35px;line-height:20.35px;letter-spacing:4.0px;font-weight:bold;">H2</div>
<div class="t" style="left:903.5px;top:257.17px;color:#5f6e68;font-size:20.35px;line-height:20.35px;letter-spacing:0px;font-weight:bold;transform:scaleX(1.5);">·</div>
<div class="t" style="left:943.7px;top:257.17px;color:#5f6e68;font-size:20.35px;line-height:20.35px;letter-spacing:4.0px;font-weight:bold;">1.</div>
<div class="t" style="left:990.58px;top:253.33px;color:#5f6e68;font-size:31.98px;line-height:31.98px;letter-spacing:0px;font-weight:bold;transform:scaleX(1.4583);">“</div>
<div class="t" style="left:558.3px;top:334.52px;color:#5f6e68;font-size:20.95px;line-height:20.95px;letter-spacing:5.221px;font-weight:bold;-webkit-text-stroke:1.89px currentColor;transform:scaleX(1.2);">IMPORTANT</div>
<div class="t" style="left:780.74px;top:334.52px;color:#5f6e68;font-size:20.95px;line-height:20.95px;letter-spacing:4.938px;font-weight:bold;-webkit-text-stroke:1.89px currentColor;transform:scaleX(1.2);">COORDINATES</div>
<div class="t" style="left:594.4px;top:380.35px;color:#d4fcd8;font-size:23.69px;line-height:23.69px;letter-spacing:2.298px;font-weight:bold;">VILLAGE:</div>
<div class="t" style="left:738.1px;top:380.35px;color:#d4fcd8;font-size:23.69px;line-height:23.69px;letter-spacing:5.441px;font-weight:bold;">X=150,</div>
<div class="t" style="left:857.93px;top:380.35px;color:#d4fcd8;font-size:23.69px;line-height:23.69px;letter-spacing:6.219px;font-weight:bold;">Y=65,</div>
<div class="t" style="left:962.42px;top:380.35px;color:#d4fcd8;font-size:23.69px;line-height:23.69px;letter-spacing:4.719px;font-weight:bold;">Z=300</div>
<div class="t" style="left:592.4px;top:425.35px;color:#d4fcd8;font-size:23.69px;line-height:23.69px;letter-spacing:1.877px;font-weight:bold;">NETHER</div>
<div class="t" style="left:716.37px;top:425.35px;color:#d4fcd8;font-size:23.69px;line-height:23.69px;letter-spacing:2.196px;font-weight:bold;">PORTAL:</div>
<div class="t" style="left:852.14px;top:425.35px;color:#d4fcd8;font-size:23.69px;line-height:23.69px;letter-spacing:6.425px;font-weight:bold;">X=-50,</div>
<div class="t" style="left:971.85px;top:425.35px;color:#d4fcd8;font-size:23.69px;line-height:23.69px;letter-spacing:6.203px;font-weight:bold;">Y=70,</div>
<div class="t" style="left:1076.25px;top:425.35px;color:#d4fcd8;font-size:23.69px;line-height:23.69px;letter-spacing:3.888px;font-weight:bold;">Z=120</div>
<div class="t" style="left:593.4px;top:470.65px;color:#d4fcd8;font-size:23.69px;line-height:23.69px;letter-spacing:2.2px;font-weight:bold;">STRONGHOLD</div>
<div class="t" style="left:797.76px;top:470.65px;color:#d4fcd8;font-size:23.69px;line-height:23.69px;letter-spacing:2.683px;font-weight:bold;">ENTRANCE:</div>
<div class="t" style="left:975.78px;top:470.65px;color:#d4fcd8;font-size:23.69px;line-height:23.69px;letter-spacing:6.062px;font-weight:bold;">X=820,</div>
<div class="t" style="left:1098.64px;top:470.65px;color:#d4fcd8;font-size:23.69px;line-height:23.69px;letter-spacing:6.188px;font-weight:bold;">Y=40,</div>
<div class="t" style="left:1202.95px;top:470.65px;color:#d4fcd8;font-size:23.69px;line-height:23.69px;letter-spacing:5.41px;font-weight:bold;">Z=-230</div>
<div class="t" style="left:592.4px;top:515.45px;color:#d4fcd8;font-size:23.69px;line-height:23.69px;letter-spacing:2.883px;font-weight:bold;">DIAMOND</div>
<div class="t" style="left:739.31px;top:515.45px;color:#d4fcd8;font-size:23.69px;line-height:23.69px;letter-spacing:3.022px;font-weight:bold;">MINE:</div>
<div class="t" style="left:836.01px;top:515.45px;color:#d4fcd8;font-size:23.69px;line-height:23.69px;letter-spacing:5.152px;font-weight:bold;">X=12,</div>
<div class="t" style="left:936.23px;top:515.45px;color:#d4fcd8;font-size:23.69px;line-height:23.69px;letter-spacing:4.587px;font-weight:bold;">Y=11,</div>
<div class="t" style="left:1034.19px;top:515.45px;color:#d4fcd8;font-size:23.69px;line-height:23.69px;letter-spacing:5.152px;font-weight:bold;">Z=-45</div>
<div class="t" style="left:2667.6px;top:198.76px;color:#8fa596;font-size:19.19px;line-height:19.19px;letter-spacing:1.467px;font-weight:bold;">TODO</div>
<div class="t" style="left:3449.0px;top:276.97px;color:#5f6e68;font-size:23.14px;line-height:23.14px;letter-spacing:9.75px;font-weight:bold;-webkit-text-stroke:2.08px currentColor;transform:scaleX(1.2);">0/4</div>
<div class="t" style="left:2757.0px;top:358.3px;color:#d4fcd8;font-size:37.21px;line-height:37.21px;letter-spacing:3.791px;font-weight:bold;">FIND</div>
<div class="t" style="left:2880.15px;top:358.3px;color:#d4fcd8;font-size:37.21px;line-height:37.21px;letter-spacing:1.799px;font-weight:bold;">NETHER</div>
<div class="t" style="left:3067.93px;top:358.3px;color:#d4fcd8;font-size:37.21px;line-height:37.21px;letter-spacing:2.053px;font-weight:bold;">FORTRESS</div>
<div class="t" style="left:2757.12px;top:474.3px;color:#d4fcd8;font-size:37.21px;line-height:37.21px;letter-spacing:0.3px;font-weight:bold;transform:scaleX(0.9376);">GET</div>
<div class="t" style="left:2855.94px;top:474.3px;color:#d4fcd8;font-size:37.21px;line-height:37.21px;letter-spacing:0.884px;font-weight:bold;">BLAZE</div>
<div class="t" style="left:3009.46px;top:474.3px;color:#d4fcd8;font-size:37.21px;line-height:37.21px;letter-spacing:2.014px;font-weight:bold;">RODS</div>
<div class="t" style="left:2757.0px;top:590.3px;color:#d4fcd8;font-size:37.21px;line-height:37.21px;letter-spacing:0.895px;font-weight:bold;">LOCATE</div>
<div class="t" style="left:2940.1px;top:590.3px;color:#d4fcd8;font-size:37.21px;line-height:37.21px;letter-spacing:2.267px;font-weight:bold;">STRONGHOLD</div>
<div class="t" style="left:2757.0px;top:706.3px;color:#d4fcd8;font-size:37.21px;line-height:37.21px;letter-spacing:0.498px;font-weight:bold;">DEFEAT</div>
<div class="t" style="left:2936.17px;top:706.3px;color:#d4fcd8;font-size:37.21px;line-height:37.21px;letter-spacing:0.3px;font-weight:bold;transform:scaleX(0.9461);">THE</div>
<div class="t" style="left:3032.48px;top:706.3px;color:#d4fcd8;font-size:37.21px;line-height:37.21px;letter-spacing:1.788px;font-weight:bold;">ENDER</div>
<div class="t" style="left:3195.31px;top:706.3px;color:#d4fcd8;font-size:37.21px;line-height:37.21px;letter-spacing:2.618px;font-weight:bold;">DRAGON</div>
<div class="t" style="left:2685.8px;top:1345.84px;color:#77777c;font-size:32.56px;line-height:32.56px;letter-spacing:1.835px;font-weight:bold;">ADD</div>
<div class="t" style="left:2784.53px;top:1345.84px;color:#77777c;font-size:32.56px;line-height:32.56px;letter-spacing:0px;font-weight:bold;transform:scaleX(0.8145);">A</div>
<div class="t" style="left:2830.13px;top:1345.84px;color:#77777c;font-size:32.56px;line-height:32.56px;letter-spacing:3.395px;font-weight:bold;">TASK...</div>
<div class="t" style="left:3400.0px;top:1349.34px;color:#5f6e68;font-size:26.99px;line-height:26.99px;letter-spacing:3.75px;font-weight:bold;-webkit-text-stroke:2.43px currentColor;transform:scaleX(1.2);">ADD</div>
<div class="t" style="left:2666.3px;top:1473.57px;color:#8fa596;font-size:19.77px;line-height:19.77px;letter-spacing:2.82px;font-weight:bold;">ASPIRATIONS</div>
<div class="t" style="left:577.0px;top:889.16px;color:#8fa596;font-size:19.19px;line-height:19.19px;letter-spacing:4.7px;font-weight:bold;">AI</div>
<div class="t" style="left:555.2px;top:954.69px;color:#5f6e68;font-size:17.74px;line-height:17.74px;letter-spacing:1.958px;font-weight:bold;-webkit-text-stroke:1.6px currentColor;transform:scaleX(1.2);">YOU</div>
<div class="t" style="left:620.02px;top:951.9px;color:#d4fcd8;font-size:22.09px;line-height:22.09px;letter-spacing:0.3px;font-weight:bold;transform:scaleX(0.985);">HOW</div>
<div class="t" style="left:692.17px;top:951.9px;color:#d4fcd8;font-size:22.09px;line-height:22.09px;letter-spacing:0.3px;font-weight:bold;transform:scaleX(0.9891);">DO</div>
<div class="t" style="left:742.71px;top:951.9px;color:#d4fcd8;font-size:22.09px;line-height:22.09px;letter-spacing:0px;font-weight:bold;transform:scaleX(0.76);">I</div>
<div class="t" style="left:764.87px;top:951.9px;color:#d4fcd8;font-size:22.09px;line-height:22.09px;letter-spacing:1.159px;font-weight:bold;">BEAT</div>
<div class="t" style="left:847.7px;top:951.9px;color:#d4fcd8;font-size:22.09px;line-height:22.09px;letter-spacing:0.339px;font-weight:bold;">THE</div>
<div class="t" style="left:909.74px;top:951.9px;color:#d4fcd8;font-size:22.09px;line-height:22.09px;letter-spacing:2.079px;font-weight:bold;">ENDER</div>
<div class="t" style="left:1013.41px;top:951.9px;color:#d4fcd8;font-size:22.09px;line-height:22.09px;letter-spacing:2.639px;font-weight:bold;">DRAGON</div>
<div class="t" style="left:554.0px;top:1018.99px;color:#5f6e68;font-size:17.74px;line-height:17.74px;letter-spacing:1.7px;font-weight:bold;-webkit-text-stroke:1.6px currentColor;transform:scaleX(1.2);">MARCUS</div>
<div class="t" style="left:672.7px;top:1015.6px;color:#9db5a0;font-size:22.09px;line-height:22.09px;letter-spacing:1.278px;font-weight:bold;">ALL</div>
<div class="t" style="left:735.49px;top:1015.6px;color:#9db5a0;font-size:22.09px;line-height:22.09px;letter-spacing:0.778px;font-weight:bold;">SET</div>
<div class="t" style="left:799.29px;top:1015.6px;color:#9db5a0;font-size:22.09px;line-height:22.09px;letter-spacing:0px;font-weight:bold;transform:scaleX(0.8291);">—</div>
<div class="t" style="left:836.0px;top:1015.6px;color:#9db5a0;font-size:22.09px;line-height:22.09px;letter-spacing:0px;font-weight:bold;transform:scaleX(0.76);">I</div>
<div class="t" style="left:858.04px;top:1015.6px;color:#9db5a0;font-size:22.09px;line-height:22.09px;letter-spacing:2.425px;font-weight:bold;">DROPPED</div>
<div class="t" style="left:998.96px;top:1015.6px;color:#9db5a0;font-size:22.09px;line-height:22.09px;letter-spacing:0px;font-weight:bold;transform:scaleX(0.8686);">A</div>
<div class="t" style="left:1030.22px;top:1015.6px;color:#9db5a0;font-size:22.09px;line-height:22.09px;letter-spacing:1.758px;font-weight:bold;">CLEAR</div>
<div class="t" style="left:1130.49px;top:1015.6px;color:#9db5a0;font-size:22.09px;line-height:22.09px;letter-spacing:4.007px;font-weight:bold;">STEP-BY-STEP</div>
<div class="t" style="left:1352.81px;top:1015.6px;color:#9db5a0;font-size:22.09px;line-height:22.09px;letter-spacing:1.738px;font-weight:bold;">BATTLE</div>
<div class="t" style="left:1465.74px;top:1015.6px;color:#9db5a0;font-size:22.09px;line-height:22.09px;letter-spacing:3.458px;font-weight:bold;">PLAN</div>
<div class="t" style="left:1553.35px;top:1015.6px;color:#9db5a0;font-size:22.09px;line-height:22.09px;letter-spacing:2.752px;font-weight:bold;">INTO</div>
<div class="t" style="left:1631.97px;top:1015.6px;color:#9db5a0;font-size:22.09px;line-height:22.09px;letter-spacing:0px;font-weight:bold;transform:scaleX(0.8686);">A</div>
<div class="t" style="left:553.0px;top:1053.1px;color:#9db5a0;font-size:22.09px;line-height:22.09px;letter-spacing:0.864px;font-weight:bold;">NEW</div>
<div class="t" style="left:625.02px;top:1053.1px;color:#9db5a0;font-size:22.09px;line-height:22.09px;letter-spacing:2.138px;font-weight:bold;">NOTE</div>
<div class="t" style="left:709.72px;top:1053.1px;color:#9db5a0;font-size:22.09px;line-height:22.09px;letter-spacing:2.964px;font-weight:bold;">ON</div>
<div class="t" style="left:762.97px;top:1053.1px;color:#9db5a0;font-size:22.09px;line-height:22.09px;letter-spacing:3.164px;font-weight:bold;">YOUR</div>
<div class="t" style="left:853.75px;top:1053.1px;color:#9db5a0;font-size:22.09px;line-height:22.09px;letter-spacing:2.764px;font-weight:bold;">SPACE:</div>
<div class="t" style="left:966.86px;top:1053.1px;color:#9db5a0;font-size:22.09px;line-height:22.09px;letter-spacing:2.78px;font-weight:bold;">&quot;ENDER</div>
<div class="t" style="left:1086.05px;top:1053.1px;color:#9db5a0;font-size:22.09px;line-height:22.09px;letter-spacing:2.604px;font-weight:bold;">DRAGON</div>
<div class="t" style="left:1215.36px;top:1053.1px;color:#9db5a0;font-size:22.09px;line-height:22.09px;letter-spacing:0px;font-weight:bold;transform:scaleX(0.8291);">—</div>
<div class="t" style="left:1252.89px;top:1053.1px;color:#9db5a0;font-size:22.09px;line-height:22.09px;letter-spacing:3.611px;font-weight:bold;">WINNING</div>
<div class="t" style="left:1389.85px;top:1053.1px;color:#9db5a0;font-size:22.09px;line-height:22.09px;letter-spacing:3.2px;font-weight:bold;">STRATEGY.&quot;</div>
<div class="t" style="left:1571.96px;top:1053.1px;color:#9db5a0;font-size:22.09px;line-height:22.09px;letter-spacing:0.3px;font-weight:bold;transform:scaleX(0.9722);">IT</div>
<div class="t" style="left:553.0px;top:1090.6px;color:#9db5a0;font-size:22.09px;line-height:22.09px;letter-spacing:3.5px;font-weight:bold;">COVERS:</div>
<div class="t" style="left:554.0px;top:1129.38px;color:#9db5a0;font-size:19.54px;line-height:19.54px;letter-spacing:0px;font-weight:bold;-webkit-text-stroke:1.76px currentColor;transform:scaleX(1.3029);">-</div>
<div class="t" style="left:582.43px;top:1128.1px;color:#9db5a0;font-size:22.09px;line-height:22.09px;letter-spacing:0.831px;font-weight:bold;">WHAT</div>
<div class="t" style="left:670.24px;top:1128.1px;color:#9db5a0;font-size:22.09px;line-height:22.09px;letter-spacing:0.3px;font-weight:bold;transform:scaleX(0.9207);">TO</div>
<div class="t" style="left:716.45px;top:1128.1px;color:#9db5a0;font-size:22.09px;line-height:22.09px;letter-spacing:3.047px;font-weight:bold;">BRING</div>
<div class="t" style="left:816.96px;top:1128.1px;color:#9db5a0;font-size:22.09px;line-height:22.09px;letter-spacing:3.169px;font-weight:bold;">(GEAR,</div>
<div class="t" style="left:927.12px;top:1128.1px;color:#9db5a0;font-size:22.09px;line-height:22.09px;letter-spacing:3.629px;font-weight:bold;">POTIONS,</div>
<div class="t" style="left:1074.83px;top:1128.1px;color:#9db5a0;font-size:22.09px;line-height:22.09px;letter-spacing:3.287px;font-weight:bold;">BEDS,</div>
<div class="t" style="left:1172.3px;top:1128.1px;color:#9db5a0;font-size:22.09px;line-height:22.09px;letter-spacing:2.784px;font-weight:bold;">BLOCKS)</div>
<div class="t" style="left:554.0px;top:1166.88px;color:#9db5a0;font-size:19.54px;line-height:19.54px;letter-spacing:0px;font-weight:bold;-webkit-text-stroke:1.76px currentColor;transform:scaleX(1.3029);">-</div>
<div class="t" style="left:581.43px;top:1165.6px;color:#9db5a0;font-size:22.09px;line-height:22.09px;letter-spacing:0.3px;font-weight:bold;transform:scaleX(0.9838);">HOW</div>
<div class="t" style="left:654.43px;top:1165.6px;color:#9db5a0;font-size:22.09px;line-height:22.09px;letter-spacing:0.3px;font-weight:bold;transform:scaleX(0.9203);">TO</div>
<div class="t" style="left:700.6px;top:1165.6px;color:#9db5a0;font-size:22.09px;line-height:22.09px;letter-spacing:2.589px;font-weight:bold;">HANDLE</div>
<div class="t" style="left:822.83px;top:1165.6px;color:#9db5a0;font-size:22.09px;line-height:22.09px;letter-spacing:3.353px;font-weight:bold;">CRYSTALS</div>
<div class="t" style="left:982.6px;top:1165.6px;color:#9db5a0;font-size:22.09px;line-height:22.09px;letter-spacing:2.981px;font-weight:bold;">SAFELY</div>
<div class="t" style="left:554.0px;top:1204.38px;color:#9db5a0;font-size:19.54px;line-height:19.54px;letter-spacing:0px;font-weight:bold;-webkit-text-stroke:1.76px currentColor;transform:scaleX(1.3029);">-</div>
<div class="t" style="left:582.46px;top:1203.1px;color:#9db5a0;font-size:22.09px;line-height:22.09px;letter-spacing:1.857px;font-weight:bold;">WHEN</div>
<div class="t" style="left:673.38px;top:1203.1px;color:#9db5a0;font-size:22.09px;line-height:22.09px;letter-spacing:0.3px;font-weight:bold;transform:scaleX(0.9211);">TO</div>
<div class="t" style="left:719.63px;top:1203.1px;color:#9db5a0;font-size:22.09px;line-height:22.09px;letter-spacing:1.351px;font-weight:bold;">USE</div>
<div class="t" style="left:785.69px;top:1203.1px;color:#9db5a0;font-size:22.09px;line-height:22.09px;letter-spacing:0.3px;font-weight:bold;transform:scaleX(0.9847);">BOW</div>
<div class="t" style="left:858.79px;top:1203.1px;color:#9db5a0;font-size:22.09px;line-height:22.09px;letter-spacing:4.831px;font-weight:bold;">VS.</div>
<div class="t" style="left:920.8px;top:1203.1px;color:#9db5a0;font-size:22.09px;line-height:22.09px;letter-spacing:1.051px;font-weight:bold;">MELEE</div>
<div class="t" style="left:554.0px;top:1241.88px;color:#9db5a0;font-size:19.54px;line-height:19.54px;letter-spacing:0px;font-weight:bold;-webkit-text-stroke:1.76px currentColor;transform:scaleX(1.3029);">-</div>
<div class="t" style="left:581.4px;top:1240.6px;color:#9db5a0;font-size:22.09px;line-height:22.09px;letter-spacing:0.82px;font-weight:bold;">BED</div>
<div class="t" style="left:647.32px;top:1240.6px;color:#9db5a0;font-size:22.09px;line-height:22.09px;letter-spacing:2.29px;font-weight:bold;">BURST</div>
<div class="t" style="left:751.76px;top:1240.6px;color:#9db5a0;font-size:22.09px;line-height:22.09px;letter-spacing:2.952px;font-weight:bold;">TIMING</div>
<div class="t" style="left:860.8px;top:1240.6px;color:#9db5a0;font-size:22.09px;line-height:22.09px;letter-spacing:2.976px;font-weight:bold;">DURING</div>
<div class="t" style="left:979.96px;top:1240.6px;color:#9db5a0;font-size:22.09px;line-height:22.09px;letter-spacing:2.273px;font-weight:bold;">PERCHES</div>
<div class="t" style="left:554.0px;top:1279.38px;color:#9db5a0;font-size:19.54px;line-height:19.54px;letter-spacing:0px;font-weight:bold;-webkit-text-stroke:1.76px currentColor;transform:scaleX(1.3029);">-</div>
<div class="t" style="left:581.4px;top:1278.1px;color:#9db5a0;font-size:22.09px;line-height:22.09px;letter-spacing:2.974px;font-weight:bold;">SAFETY</div>
<div class="t" style="left:701.55px;top:1278.1px;color:#9db5a0;font-size:22.09px;line-height:22.09px;letter-spacing:2.758px;font-weight:bold;">TIPS</div>
<div class="t" style="left:776.1px;top:1278.1px;color:#9db5a0;font-size:22.09px;line-height:22.09px;letter-spacing:3.143px;font-weight:bold;">(ENDERMEN</div>
<div class="t" style="left:951.52px;top:1278.1px;color:#9db5a0;font-size:22.09px;line-height:22.09px;letter-spacing:3.05px;font-weight:bold;">CONTROL,</div>
<div class="t" style="left:1106.15px;top:1278.1px;color:#9db5a0;font-size:22.09px;line-height:22.09px;letter-spacing:1.038px;font-weight:bold;">WATER</div>
<div class="t" style="left:1208.58px;top:1278.1px;color:#9db5a0;font-size:22.09px;line-height:22.09px;letter-spacing:1.774px;font-weight:bold;">BUCKET</div>
<div class="t" style="left:1327.73px;top:1278.1px;color:#9db5a0;font-size:22.09px;line-height:22.09px;letter-spacing:3.974px;font-weight:bold;">SAVES)</div>
<div class="t" style="left:554.0px;top:1316.88px;color:#9db5a0;font-size:19.54px;line-height:19.54px;letter-spacing:0px;font-weight:bold;-webkit-text-stroke:1.76px currentColor;transform:scaleX(1.3029);">-</div>
<div class="t" style="left:581.58px;top:1315.6px;color:#9db5a0;font-size:22.09px;line-height:22.09px;letter-spacing:0px;font-weight:bold;transform:scaleX(0.8686);">A</div>
<div class="t" style="left:612.94px;top:1315.6px;color:#9db5a0;font-size:22.09px;line-height:22.09px;letter-spacing:2.046px;font-weight:bold;">QUICK</div>
<div class="t" style="left:710.46px;top:1315.6px;color:#9db5a0;font-size:22.09px;line-height:22.09px;letter-spacing:1.799px;font-weight:bold;">LOADOUT</div>
<div class="t" style="left:848.59px;top:1315.6px;color:#9db5a0;font-size:22.09px;line-height:22.09px;letter-spacing:2.401px;font-weight:bold;">CHECKLIST</div>
<div class="t" style="left:554.0px;top:1390.6px;color:#9db5a0;font-size:22.09px;line-height:22.09px;letter-spacing:1.808px;font-weight:bold;">WANT</div>
<div class="t" style="left:643.68px;top:1390.6px;color:#9db5a0;font-size:22.09px;line-height:22.09px;letter-spacing:0.3px;font-weight:bold;transform:scaleX(0.9872);">ME</div>
<div class="t" style="left:694.81px;top:1390.6px;color:#9db5a0;font-size:22.09px;line-height:22.09px;letter-spacing:0.3px;font-weight:bold;transform:scaleX(0.9195);">TO</div>
<div class="t" style="left:740.91px;top:1390.6px;color:#9db5a0;font-size:22.09px;line-height:22.09px;letter-spacing:1.771px;font-weight:bold;">BREAK</div>
<div class="t" style="left:844.24px;top:1390.6px;color:#9db5a0;font-size:22.09px;line-height:22.09px;letter-spacing:3.141px;font-weight:bold;">YOUR</div>
<div class="t" style="left:934.9px;top:1390.6px;color:#9db5a0;font-size:22.09px;line-height:22.09px;letter-spacing:1.901px;font-weight:bold;">&quot;DEFEAT</div>
<div class="t" style="left:1064.55px;top:1390.6px;color:#9db5a0;font-size:22.09px;line-height:22.09px;letter-spacing:0.3px;font-weight:bold;">THE</div>
<div class="t" style="left:1126.35px;top:1390.6px;color:#9db5a0;font-size:22.09px;line-height:22.09px;letter-spacing:2.021px;font-weight:bold;">ENDER</div>
<div class="t" style="left:1229.68px;top:1390.6px;color:#9db5a0;font-size:22.09px;line-height:22.09px;letter-spacing:3.101px;font-weight:bold;">DRAGON&quot;</div>
<div class="t" style="left:1374.52px;top:1390.6px;color:#9db5a0;font-size:22.09px;line-height:22.09px;letter-spacing:0.781px;font-weight:bold;">TODO</div>
<div class="t" style="left:1458.11px;top:1390.6px;color:#9db5a0;font-size:22.09px;line-height:22.09px;letter-spacing:2.754px;font-weight:bold;">INTO</div>
<div class="t" style="left:1536.61px;top:1390.6px;color:#9db5a0;font-size:22.09px;line-height:22.09px;letter-spacing:2.884px;font-weight:bold;">SMALLER,</div>
<div class="t" style="left:553.0px;top:1428.1px;color:#9db5a0;font-size:22.09px;line-height:22.09px;letter-spacing:2.52px;font-weight:bold;">ACTIONABLE</div>
<div class="t" style="left:737.93px;top:1428.1px;color:#9db5a0;font-size:22.09px;line-height:22.09px;letter-spacing:2.517px;font-weight:bold;">STEPS</div>
<div class="t" style="left:838.26px;top:1428.1px;color:#9db5a0;font-size:22.09px;line-height:22.09px;letter-spacing:3.347px;font-weight:bold;">AND</div>
<div class="t" style="left:910.2px;top:1428.1px;color:#9db5a0;font-size:22.09px;line-height:22.09px;letter-spacing:1.827px;font-weight:bold;">ADD</div>
<div class="t" style="left:980.11px;top:1428.1px;color:#9db5a0;font-size:22.09px;line-height:22.09px;letter-spacing:1.453px;font-weight:bold;">THEM</div>
<div class="t" style="left:1064.72px;top:1428.1px;color:#9db5a0;font-size:22.09px;line-height:22.09px;letter-spacing:0.3px;font-weight:bold;transform:scaleX(0.9197);">TO</div>
<div class="t" style="left:1110.84px;top:1428.1px;color:#9db5a0;font-size:22.09px;line-height:22.09px;letter-spacing:3.147px;font-weight:bold;">YOUR</div>
<div class="t" style="left:1202.54px;top:1428.1px;color:#9db5a0;font-size:22.09px;line-height:22.09px;letter-spacing:0.787px;font-weight:bold;">TODO</div>
<div class="t" style="left:1286.15px;top:1428.1px;color:#9db5a0;font-size:22.09px;line-height:22.09px;letter-spacing:3.037px;font-weight:bold;">CARD?</div>
<div class="t" style="left:567.4px;top:2049.9px;color:#77777c;font-size:22.09px;line-height:22.09px;letter-spacing:1.673px;font-weight:bold;">ASK</div>
<div class="t" style="left:633.69px;top:2049.9px;color:#77777c;font-size:22.09px;line-height:22.09px;letter-spacing:2.133px;font-weight:bold;">MARCUS</div>
<div class="t" style="left:757.31px;top:2049.9px;color:#77777c;font-size:22.09px;line-height:22.09px;letter-spacing:3.169px;font-weight:bold;">ANYTHING...</div>
<div class="t" style="left:1804.3px;top:888.57px;color:#8fa596;font-size:19.77px;line-height:19.77px;letter-spacing:1.574px;font-weight:bold;">ENDER</div>
<div class="t" style="left:1895.34px;top:888.57px;color:#8fa596;font-size:19.77px;line-height:19.77px;letter-spacing:2.054px;font-weight:bold;">DRAGON</div>
<div class="t" style="left:2009.36px;top:888.57px;color:#8fa596;font-size:19.77px;line-height:19.77px;letter-spacing:0px;font-weight:bold;transform:scaleX(0.816);">—</div>
<div class="t" style="left:2042.43px;top:888.57px;color:#8fa596;font-size:19.77px;line-height:19.77px;letter-spacing:2.941px;font-weight:bold;">WINNING</div>
<div class="t" style="left:2162.82px;top:888.57px;color:#8fa596;font-size:19.77px;line-height:19.77px;letter-spacing:2.168px;font-weight:bold;">STRATEGY</div>
<div class="t" style="left:1782.2px;top:948.36px;color:#5f6e68;font-size:17.99px;line-height:17.99px;letter-spacing:0px;font-weight:bold;-webkit-text-stroke:1.62px currentColor;transform:scaleX(1.0769);">B</div>
<div class="t" style="left:1833.2px;top:947.17px;color:#5f6e68;font-size:20.35px;line-height:20.35px;letter-spacing:0px;font-weight:bold;transform:scaleX(1.6);">/</div>
<div class="t" style="left:1874.28px;top:947.17px;color:#5f6e68;font-size:20.35px;line-height:20.35px;letter-spacing:0px;font-weight:bold;transform:scaleX(0.9231);">U</div>
<div class="t" style="left:1920.08px;top:947.17px;color:#5f6e68;font-size:20.35px;line-height:20.35px;letter-spacing:0px;font-weight:normal;transform:scaleX(1.125);">S</div>
<div class="t" style="left:1968.54px;top:949.17px;color:#5f6e68;font-size:20.35px;line-height:20.35px;letter-spacing:0px;font-weight:bold;transform:scaleX(1.36);">`</div>
<div class="t" style="left:2010.21px;top:947.17px;color:#5f6e68;font-size:20.35px;line-height:20.35px;letter-spacing:0.3px;font-weight:bold;transform:scaleX(0.9881);">H1</div>
<div class="t" style="left:2067.2px;top:947.17px;color:#5f6e68;font-size:20.35px;line-height:20.35px;letter-spacing:4.0px;font-weight:bold;">H2</div>
<div class="t" style="left:2130.7px;top:947.17px;color:#5f6e68;font-size:20.35px;line-height:20.35px;letter-spacing:0px;font-weight:bold;transform:scaleX(1.5);">·</div>
<div class="t" style="left:2170.9px;top:947.17px;color:#5f6e68;font-size:20.35px;line-height:20.35px;letter-spacing:4.0px;font-weight:bold;">1.</div>
<div class="t" style="left:2217.78px;top:943.33px;color:#5f6e68;font-size:31.98px;line-height:31.98px;letter-spacing:0px;font-weight:bold;transform:scaleX(1.4583);">“</div>
<div class="t" style="left:1785.4px;top:1033.63px;color:#d4fcd8;font-size:28.79px;line-height:28.79px;letter-spacing:6.083px;font-weight:bold;-webkit-text-stroke:2.59px currentColor;transform:scaleX(1.2);">ENDER</div>
<div class="t" style="left:1966.2px;top:1033.63px;color:#d4fcd8;font-size:28.79px;line-height:28.79px;letter-spacing:6.68px;font-weight:bold;-webkit-text-stroke:2.59px currentColor;transform:scaleX(1.2);">DRAGON</div>
<div class="t" style="left:2191.29px;top:1033.63px;color:#d4fcd8;font-size:28.79px;line-height:28.79px;letter-spacing:0px;font-weight:bold;-webkit-text-stroke:2.59px currentColor;transform:scaleX(1.0116);">—</div>
<div class="t" style="left:2250.84px;top:1033.63px;color:#d4fcd8;font-size:28.79px;line-height:28.79px;letter-spacing:8.033px;font-weight:bold;-webkit-text-stroke:2.59px currentColor;transform:scaleX(1.2);">FAST,</div>
<div class="t" style="left:1785.4px;top:1082.13px;color:#d4fcd8;font-size:28.79px;line-height:28.79px;letter-spacing:5.992px;font-weight:bold;-webkit-text-stroke:2.59px currentColor;transform:scaleX(1.2);">RELIABLE</div>
<div class="t" style="left:2039.86px;top:1082.13px;color:#d4fcd8;font-size:28.79px;line-height:28.79px;letter-spacing:6.373px;font-weight:bold;-webkit-text-stroke:2.59px currentColor;transform:scaleX(1.2);">STRATEGY</div>
<div class="t" style="left:1783.8px;top:1137.15px;color:#d4fcd8;font-size:23.69px;line-height:23.69px;letter-spacing:2.209px;font-weight:bold;">PREP</div>
<div class="t" style="left:1873.1px;top:1137.15px;color:#d4fcd8;font-size:23.69px;line-height:23.69px;letter-spacing:1.573px;font-weight:bold;">(BEFORE</div>
<div class="t" style="left:2008.21px;top:1137.15px;color:#d4fcd8;font-size:23.69px;line-height:23.69px;letter-spacing:0.3px;font-weight:bold;transform:scaleX(0.9818);">THE</div>
<div class="t" style="left:2071.63px;top:1137.15px;color:#d4fcd8;font-size:23.69px;line-height:23.69px;letter-spacing:3.456px;font-weight:bold;">END)</div>
<div class="t" style="left:1820.8px;top:1186.25px;color:#d4fcd8;font-size:23.69px;line-height:23.69px;letter-spacing:5.195px;font-weight:bold;">12–16</div>
<div class="t" style="left:1924.15px;top:1186.25px;color:#d4fcd8;font-size:23.69px;line-height:23.69px;letter-spacing:2.825px;font-weight:bold;">EYES</div>
<div class="t" style="left:2013.26px;top:1186.25px;color:#d4fcd8;font-size:23.69px;line-height:23.69px;letter-spacing:0.3px;font-weight:bold;transform:scaleX(0.9376);">OF</div>
<div class="t" style="left:2061.12px;top:1186.25px;color:#d4fcd8;font-size:23.69px;line-height:23.69px;letter-spacing:2.01px;font-weight:bold;">ENDER</div>
<div class="t" style="left:2169.73px;top:1186.25px;color:#d4fcd8;font-size:23.69px;line-height:23.69px;letter-spacing:1.695px;font-weight:bold;">(TO</div>
<div class="t" style="left:2230.69px;top:1186.25px;color:#d4fcd8;font-size:23.69px;line-height:23.69px;letter-spacing:3.457px;font-weight:bold;">FIND/ACTIVATE</div>
<div class="t" style="left:2470.75px;top:1186.25px;color:#d4fcd8;font-size:23.69px;line-height:23.69px;letter-spacing:0.3px;font-weight:bold;transform:scaleX(0.9796);">THE</div>
<div class="t" style="left:1819.8px;top:1229.95px;color:#d4fcd8;font-size:23.69px;line-height:23.69px;letter-spacing:2.843px;font-weight:bold;">PORTAL)</div>
<div class="t" style="left:1820.8px;top:1274.25px;color:#d4fcd8;font-size:23.69px;line-height:23.69px;letter-spacing:2.081px;font-weight:bold;">ARMOR:</div>
<div class="t" style="left:1943.8px;top:1274.25px;color:#d4fcd8;font-size:23.69px;line-height:23.69px;letter-spacing:2.874px;font-weight:bold;">DIAMOND</div>
<div class="t" style="left:2091.68px;top:1274.25px;color:#d4fcd8;font-size:23.69px;line-height:23.69px;letter-spacing:0.3px;font-weight:bold;transform:scaleX(0.9509);">OR</div>
<div class="t" style="left:2142.84px;top:1274.25px;color:#d4fcd8;font-size:23.69px;line-height:23.69px;letter-spacing:1.979px;font-weight:bold;">NETHERITE</div>
<div class="t" style="left:2310.27px;top:1274.25px;color:#d4fcd8;font-size:23.69px;line-height:23.69px;letter-spacing:3.525px;font-weight:bold;">(PROJ.</div>
<div class="t" style="left:2423.49px;top:1274.25px;color:#d4fcd8;font-size:23.69px;line-height:23.69px;letter-spacing:2.327px;font-weight:bold;">PROT.</div>
<div class="t" style="left:1819.8px;top:1317.45px;color:#d4fcd8;font-size:23.69px;line-height:23.69px;letter-spacing:3.282px;font-weight:bold;">HELPS)</div>
<div class="t" style="left:1821.8px;top:1361.05px;color:#d4fcd8;font-size:23.69px;line-height:23.69px;letter-spacing:2.412px;font-weight:bold;">WEAPONS:</div>
<div class="t" style="left:1984.65px;top:1361.05px;color:#d4fcd8;font-size:23.69px;line-height:23.69px;letter-spacing:1.276px;font-weight:bold;">POWER</div>
<div class="t" style="left:2096.73px;top:1361.05px;color:#d4fcd8;font-size:23.69px;line-height:23.69px;letter-spacing:7.606px;font-weight:bold;">IV/V</div>
<div class="t" style="left:2182.54px;top:1361.05px;color:#d4fcd8;font-size:23.69px;line-height:23.69px;letter-spacing:0.3px;font-weight:bold;transform:scaleX(0.9864);">BOW</div>
<div class="t" style="left:2259.51px;top:1361.05px;color:#d4fcd8;font-size:23.69px;line-height:23.69px;letter-spacing:0px;font-weight:bold;transform:scaleX(0.815);">+</div>
<div class="t" style="left:2288.07px;top:1361.05px;color:#d4fcd8;font-size:23.69px;line-height:23.69px;letter-spacing:3.522px;font-weight:bold;">PLENTY</div>
<div class="t" style="left:2417.71px;top:1361.05px;color:#d4fcd8;font-size:23.69px;line-height:23.69px;letter-spacing:0.3px;font-weight:bold;transform:scaleX(0.944);">OF</div>
<div class="t" style="left:1820.8px;top:1404.75px;color:#d4fcd8;font-size:23.69px;line-height:23.69px;letter-spacing:1.616px;font-weight:bold;">ARROWS</div>
<div class="t" style="left:1954.43px;top:1404.75px;color:#d4fcd8;font-size:23.69px;line-height:23.69px;letter-spacing:1.815px;font-weight:bold;">(OR</div>
<div class="t" style="left:2018.61px;top:1404.75px;color:#d4fcd8;font-size:23.69px;line-height:23.69px;letter-spacing:4.436px;font-weight:bold;">INFINITY),</div>
<div class="t" style="left:2189.08px;top:1404.75px;color:#d4fcd8;font-size:23.69px;line-height:23.69px;letter-spacing:3.061px;font-weight:bold;">SHARPNESS</div>
<div class="t" style="left:2378.12px;top:1404.75px;color:#d4fcd8;font-size:23.69px;line-height:23.69px;letter-spacing:3.185px;font-weight:bold;">SWORD/AXE</div>
<div class="t" style="left:1819.8px;top:1448.85px;color:#d4fcd8;font-size:23.69px;line-height:23.69px;letter-spacing:2.926px;font-weight:bold;">POTIONS:</div>
<div class="t" style="left:1970.86px;top:1448.85px;color:#d4fcd8;font-size:23.69px;line-height:23.69px;letter-spacing:7.091px;font-weight:bold;">2–3</div>
<div class="t" style="left:2042.63px;top:1448.85px;color:#d4fcd8;font-size:23.69px;line-height:23.69px;letter-spacing:0.585px;font-weight:bold;">SLOW</div>
<div class="t" style="left:2132.97px;top:1448.85px;color:#d4fcd8;font-size:23.69px;line-height:23.69px;letter-spacing:2.528px;font-weight:bold;">FALLING</div>
<div class="t" style="left:2267.72px;top:1448.85px;color:#d4fcd8;font-size:23.69px;line-height:23.69px;letter-spacing:5.688px;font-weight:bold;">(4:00),</div>
<div class="t" style="left:2388.43px;top:1448.85px;color:#d4fcd8;font-size:23.69px;line-height:23.69px;letter-spacing:2.821px;font-weight:bold;">STRENGTH,</div>
<div class="t" style="left:1819.8px;top:1492.65px;color:#d4fcd8;font-size:23.69px;line-height:23.69px;letter-spacing:2.568px;font-weight:bold;">REGENERATION,</div>
<div class="t" style="left:2065.16px;top:1492.65px;color:#d4fcd8;font-size:23.69px;line-height:23.69px;letter-spacing:2.264px;font-weight:bold;">OPTIONAL</div>
<div class="t" style="left:2220.55px;top:1492.65px;color:#d4fcd8;font-size:23.69px;line-height:23.69px;letter-spacing:2.365px;font-weight:bold;">NIGHT</div>
<div class="t" style="left:2323.55px;top:1492.65px;color:#d4fcd8;font-size:23.69px;line-height:23.69px;letter-spacing:3.75px;font-weight:bold;">VISION</div>
<div class="t" style="left:1820.8px;top:1536.75px;color:#d4fcd8;font-size:23.69px;line-height:23.69px;letter-spacing:2.876px;font-weight:bold;">UTILITY:</div>
<div class="t" style="left:1954.32px;top:1536.75px;color:#d4fcd8;font-size:23.69px;line-height:23.69px;letter-spacing:0px;font-weight:bold;transform:scaleX(1.1855);">2</div>
<div class="t" style="left:1988.11px;top:1536.75px;color:#d4fcd8;font-size:23.69px;line-height:23.69px;letter-spacing:0.51px;font-weight:bold;">WATER</div>
<div class="t" style="left:2093.72px;top:1536.75px;color:#d4fcd8;font-size:23.69px;line-height:23.69px;letter-spacing:2.708px;font-weight:bold;">BUCKETS,</div>
<div class="t" style="left:2251.24px;top:1536.75px;color:#d4fcd8;font-size:23.69px;line-height:23.69px;letter-spacing:7.085px;font-weight:bold;">3–4</div>
<div class="t" style="left:2322.98px;top:1536.75px;color:#d4fcd8;font-size:23.69px;line-height:23.69px;letter-spacing:2.521px;font-weight:bold;">STACKS</div>
<div class="t" style="left:2450.22px;top:1536.75px;color:#d4fcd8;font-size:23.69px;line-height:23.69px;letter-spacing:0.3px;font-weight:bold;transform:scaleX(0.9375);">OF</div>
<div class="t" style="left:1819.8px;top:1580.45px;color:#d4fcd8;font-size:23.69px;line-height:23.69px;letter-spacing:2.922px;font-weight:bold;">BLOCKS,</div>
<div class="t" style="left:1959.86px;top:1580.45px;color:#d4fcd8;font-size:23.69px;line-height:23.69px;letter-spacing:2.36px;font-weight:bold;">FOOD,</div>
<div class="t" style="left:2060.84px;top:1580.45px;color:#d4fcd8;font-size:23.69px;line-height:23.69px;letter-spacing:1.99px;font-weight:bold;">ENDER</div>
<div class="t" style="left:2168.33px;top:1580.45px;color:#d4fcd8;font-size:23.69px;line-height:23.69px;letter-spacing:3.045px;font-weight:bold;">PEARLS,</div>
<div class="t" style="left:2305.13px;top:1580.45px;color:#d4fcd8;font-size:23.69px;line-height:23.69px;letter-spacing:3.509px;font-weight:bold;">PUMPKIN</div>
<div class="t" style="left:2451.71px;top:1580.45px;color:#d4fcd8;font-size:23.69px;line-height:23.69px;letter-spacing:1.197px;font-weight:bold;">HELMET</div>
<div class="t" style="left:1820.8px;top:1623.85px;color:#d4fcd8;font-size:23.69px;line-height:23.69px;letter-spacing:3.377px;font-weight:bold;">(OPTIONAL),</div>
<div class="t" style="left:2017.07px;top:1623.85px;color:#d4fcd8;font-size:23.69px;line-height:23.69px;letter-spacing:6.553px;font-weight:bold;">4–6</div>
<div class="t" style="left:2086.68px;top:1623.85px;color:#d4fcd8;font-size:23.69px;line-height:23.69px;letter-spacing:1.793px;font-weight:bold;">BEDS</div>
<div class="t" style="left:2175.56px;top:1623.85px;color:#d4fcd8;font-size:23.69px;line-height:23.69px;letter-spacing:1.953px;font-weight:bold;">(FOR</div>
<div class="t" style="left:2256.93px;top:1623.85px;color:#d4fcd8;font-size:23.69px;line-height:23.69px;letter-spacing:3.253px;font-weight:bold;">SPEED-KILL),</div>
<div class="t" style="left:2465.34px;top:1623.85px;color:#d4fcd8;font-size:23.69px;line-height:23.69px;letter-spacing:0px;font-weight:bold;transform:scaleX(0.8693);">A</div>
<div class="t" style="left:2496.86px;top:1623.85px;color:#d4fcd8;font-size:23.69px;line-height:23.69px;letter-spacing:0.3px;font-weight:bold;transform:scaleX(0.9466);">FEW</div>
<div class="t" style="left:1819.8px;top:1667.25px;color:#d4fcd8;font-size:23.69px;line-height:23.69px;letter-spacing:2.25px;font-weight:bold;">LADDERS</div>
<div class="t" style="left:1821.8px;top:1710.65px;color:#d4fcd8;font-size:23.69px;line-height:23.69px;letter-spacing:1.558px;font-weight:bold;">TOOLS:</div>
<div class="t" style="left:1934.25px;top:1710.65px;color:#d4fcd8;font-size:23.69px;line-height:23.69px;letter-spacing:3.153px;font-weight:bold;">PICKAXE</div>
<div class="t" style="left:2074.83px;top:1710.65px;color:#d4fcd8;font-size:23.69px;line-height:23.69px;letter-spacing:1.0px;font-weight:bold;">FOR</div>
<div class="t" style="left:2144.48px;top:1710.65px;color:#d4fcd8;font-size:23.69px;line-height:23.69px;letter-spacing:1.055px;font-weight:bold;">CAGED</div>
<div class="t" style="left:2252.36px;top:1710.65px;color:#d4fcd8;font-size:23.69px;line-height:23.69px;letter-spacing:3.517px;font-weight:bold;">CRYSTALS,</div>
<div class="t" style="left:1820.8px;top:1754.45px;color:#d4fcd8;font-size:23.69px;line-height:23.69px;letter-spacing:3.58px;font-weight:bold;">SHOVEL/AXE</div>
<div class="t" style="left:2023.73px;top:1754.45px;color:#d4fcd8;font-size:23.69px;line-height:23.69px;letter-spacing:1.674px;font-weight:bold;">AS</div>
<div class="t" style="left:2075.11px;top:1754.45px;color:#d4fcd8;font-size:23.69px;line-height:23.69px;letter-spacing:1.738px;font-weight:bold;">NEEDED</div>
<div class="t" style="left:1784.8px;top:1800.45px;color:#d4fcd8;font-size:23.69px;line-height:23.69px;letter-spacing:1.895px;font-weight:bold;">GETTING</div>
<div class="t" style="left:1919.82px;top:1800.45px;color:#d4fcd8;font-size:23.69px;line-height:23.69px;letter-spacing:0.3px;font-weight:bold;transform:scaleX(0.9098);">TO</div>
<div class="t" style="left:1968.86px;top:1800.45px;color:#d4fcd8;font-size:23.69px;line-height:23.69px;letter-spacing:0.3px;font-weight:bold;transform:scaleX(0.9813);">THE</div>
<div class="t" style="left:2032.24px;top:1800.45px;color:#d4fcd8;font-size:23.69px;line-height:23.69px;letter-spacing:1.54px;font-weight:bold;">FIGHT</div>
<div class="t" style="left:1784.8px;top:1843.65px;color:#d4fcd8;font-size:23.69px;line-height:23.69px;letter-spacing:3.821px;font-weight:bold;">1)</div>
<div class="t" style="left:1827.26px;top:1843.65px;color:#d4fcd8;font-size:23.69px;line-height:23.69px;letter-spacing:0.3px;font-weight:bold;transform:scaleX(0.9235);">GO</div>
<div class="t" style="left:1880.34px;top:1843.65px;color:#d4fcd8;font-size:23.69px;line-height:23.69px;letter-spacing:0.3px;font-weight:bold;transform:scaleX(0.9084);">TO</div>
<div class="t" style="left:1928.24px;top:1843.65px;color:#d4fcd8;font-size:23.69px;line-height:23.69px;letter-spacing:2.66px;font-weight:bold;">YOUR</div>
<div class="t" style="left:2022.79px;top:1843.65px;color:#d4fcd8;font-size:23.69px;line-height:23.69px;letter-spacing:2.203px;font-weight:bold;">STRONGHOLD</div>
<div class="t" style="left:2227.17px;top:1843.65px;color:#d4fcd8;font-size:23.69px;line-height:23.69px;letter-spacing:2.529px;font-weight:bold;">ENTRANCE</div>
<div class="t" style="left:2394.44px;top:1843.65px;color:#d4fcd8;font-size:23.69px;line-height:23.69px;letter-spacing:3.727px;font-weight:bold;">(YOU&#x27;VE</div>
<div class="t" style="left:1784.8px;top:1886.65px;color:#d4fcd8;font-size:23.69px;line-height:23.69px;letter-spacing:2.829px;font-weight:bold;">SAVED</div>
<div class="t" style="left:1895.69px;top:1886.65px;color:#d4fcd8;font-size:23.69px;line-height:23.69px;letter-spacing:2.531px;font-weight:bold;">COORDS).</div>
<div class="t" style="left:2047.99px;top:1886.65px;color:#d4fcd8;font-size:23.69px;line-height:23.69px;letter-spacing:1.729px;font-weight:bold;">FILL</div>
<div class="t" style="left:2121.75px;top:1886.65px;color:#d4fcd8;font-size:23.69px;line-height:23.69px;letter-spacing:0.3px;font-weight:bold;transform:scaleX(0.9798);">THE</div>
<div class="t" style="left:2184.99px;top:1886.65px;color:#d4fcd8;font-size:23.69px;line-height:23.69px;letter-spacing:2.589px;font-weight:bold;">END</div>
<div class="t" style="left:2256.74px;top:1886.65px;color:#d4fcd8;font-size:23.69px;line-height:23.69px;letter-spacing:1.764px;font-weight:bold;">FRAME</div>
<div class="t" style="left:2366.37px;top:1886.65px;color:#d4fcd8;font-size:23.69px;line-height:23.69px;letter-spacing:0.989px;font-weight:bold;">WITH</div>
<div class="t" style="left:2445.91px;top:1886.65px;color:#d4fcd8;font-size:23.69px;line-height:23.69px;letter-spacing:2.829px;font-weight:bold;">EYES</div>
<div class="t" style="left:1784.8px;top:1929.65px;color:#d4fcd8;font-size:23.69px;line-height:23.69px;letter-spacing:3.357px;font-weight:bold;">AND</div>
<div class="t" style="left:1860.37px;top:1929.65px;color:#d4fcd8;font-size:23.69px;line-height:23.69px;letter-spacing:3.807px;font-weight:bold;">JUMP</div>
<div class="t" style="left:1954.65px;top:1929.65px;color:#d4fcd8;font-size:23.69px;line-height:23.69px;letter-spacing:4.577px;font-weight:bold;">IN.</div>
<div class="t" style="left:1784.8px;top:1972.65px;color:#d4fcd8;font-size:23.69px;line-height:23.69px;letter-spacing:7.04px;font-weight:bold;">2)</div>
<div class="t" style="left:1829.32px;top:1972.65px;color:#d4fcd8;font-size:23.69px;line-height:23.69px;letter-spacing:1.52px;font-weight:bold;">IF</div>
<div class="t" style="left:1869.32px;top:1972.65px;color:#d4fcd8;font-size:23.69px;line-height:23.69px;letter-spacing:3.17px;font-weight:bold;">YOU</div>
<div class="t" style="left:1944.14px;top:1972.65px;color:#d4fcd8;font-size:23.69px;line-height:23.69px;letter-spacing:2.91px;font-weight:bold;">SPAWN</div>
<div class="t" style="left:2061.25px;top:1972.65px;color:#d4fcd8;font-size:23.69px;line-height:23.69px;letter-spacing:2.82px;font-weight:bold;">ON</div>
<div class="t" style="left:2116.68px;top:1972.65px;color:#d4fcd8;font-size:23.69px;line-height:23.69px;letter-spacing:0px;font-weight:bold;transform:scaleX(0.8693);">A</div>
<div class="t" style="left:2148.07px;top:1972.65px;color:#d4fcd8;font-size:23.69px;line-height:23.69px;letter-spacing:2.645px;font-weight:bold;">PLATFORM,</div>
<div class="t" style="left:2323.71px;top:1972.65px;color:#d4fcd8;font-size:23.69px;line-height:23.69px;letter-spacing:1.72px;font-weight:bold;">BRIDGE</div>
<div class="t" style="left:2441.78px;top:1972.65px;color:#d4fcd8;font-size:23.69px;line-height:23.69px;letter-spacing:2.424px;font-weight:bold;">SAFELY</div>
<div class="t" style="left:1785.8px;top:2015.65px;color:#d4fcd8;font-size:23.69px;line-height:23.69px;letter-spacing:0.3px;font-weight:bold;transform:scaleX(0.9112);">TO</div>
<div class="t" style="left:1834.97px;top:2015.65px;color:#d4fcd8;font-size:23.69px;line-height:23.69px;letter-spacing:0.3px;font-weight:bold;transform:scaleX(0.9833);">THE</div>
<div class="t" style="left:1898.54px;top:2015.65px;color:#d4fcd8;font-size:23.69px;line-height:23.69px;letter-spacing:3.911px;font-weight:bold;">MAIN</div>
<div class="t" style="left:1987.01px;top:2015.65px;color:#d4fcd8;font-size:23.69px;line-height:23.69px;letter-spacing:3.398px;font-weight:bold;">ISLAND.</div>
<div class="t" style="left:1783.8px;top:2064.65px;color:#d4fcd8;font-size:23.69px;line-height:23.69px;letter-spacing:2.293px;font-weight:bold;">PHASE</div>
<div class="t" style="left:1892.79px;top:2064.65px;color:#d4fcd8;font-size:23.69px;line-height:23.69px;letter-spacing:0px;font-weight:bold;transform:scaleX(0.815);">1</div>
<div class="t" style="left:1923.02px;top:2064.65px;color:#d4fcd8;font-size:23.69px;line-height:23.69px;letter-spacing:0px;font-weight:bold;transform:scaleX(0.815);">—</div>
<div class="t" style="left:1960.22px;top:2064.65px;color:#d4fcd8;font-size:23.69px;line-height:23.69px;letter-spacing:2.561px;font-weight:bold;">DESTROY</div>
<div class="t" style="left:2109.22px;top:2064.65px;color:#d4fcd8;font-size:23.69px;line-height:23.69px;letter-spacing:0.3px;font-weight:bold;transform:scaleX(0.981);">THE</div>
<div class="t" style="left:2172.57px;top:2064.65px;color:#d4fcd8;font-size:23.69px;line-height:23.69px;letter-spacing:2.618px;font-weight:bold;">END</div>
<div class="t" style="left:2245.44px;top:2064.65px;color:#d4fcd8;font-size:23.69px;line-height:23.69px;letter-spacing:2.995px;font-weight:bold;">CRYSTALS</div>
</body>
</html>
